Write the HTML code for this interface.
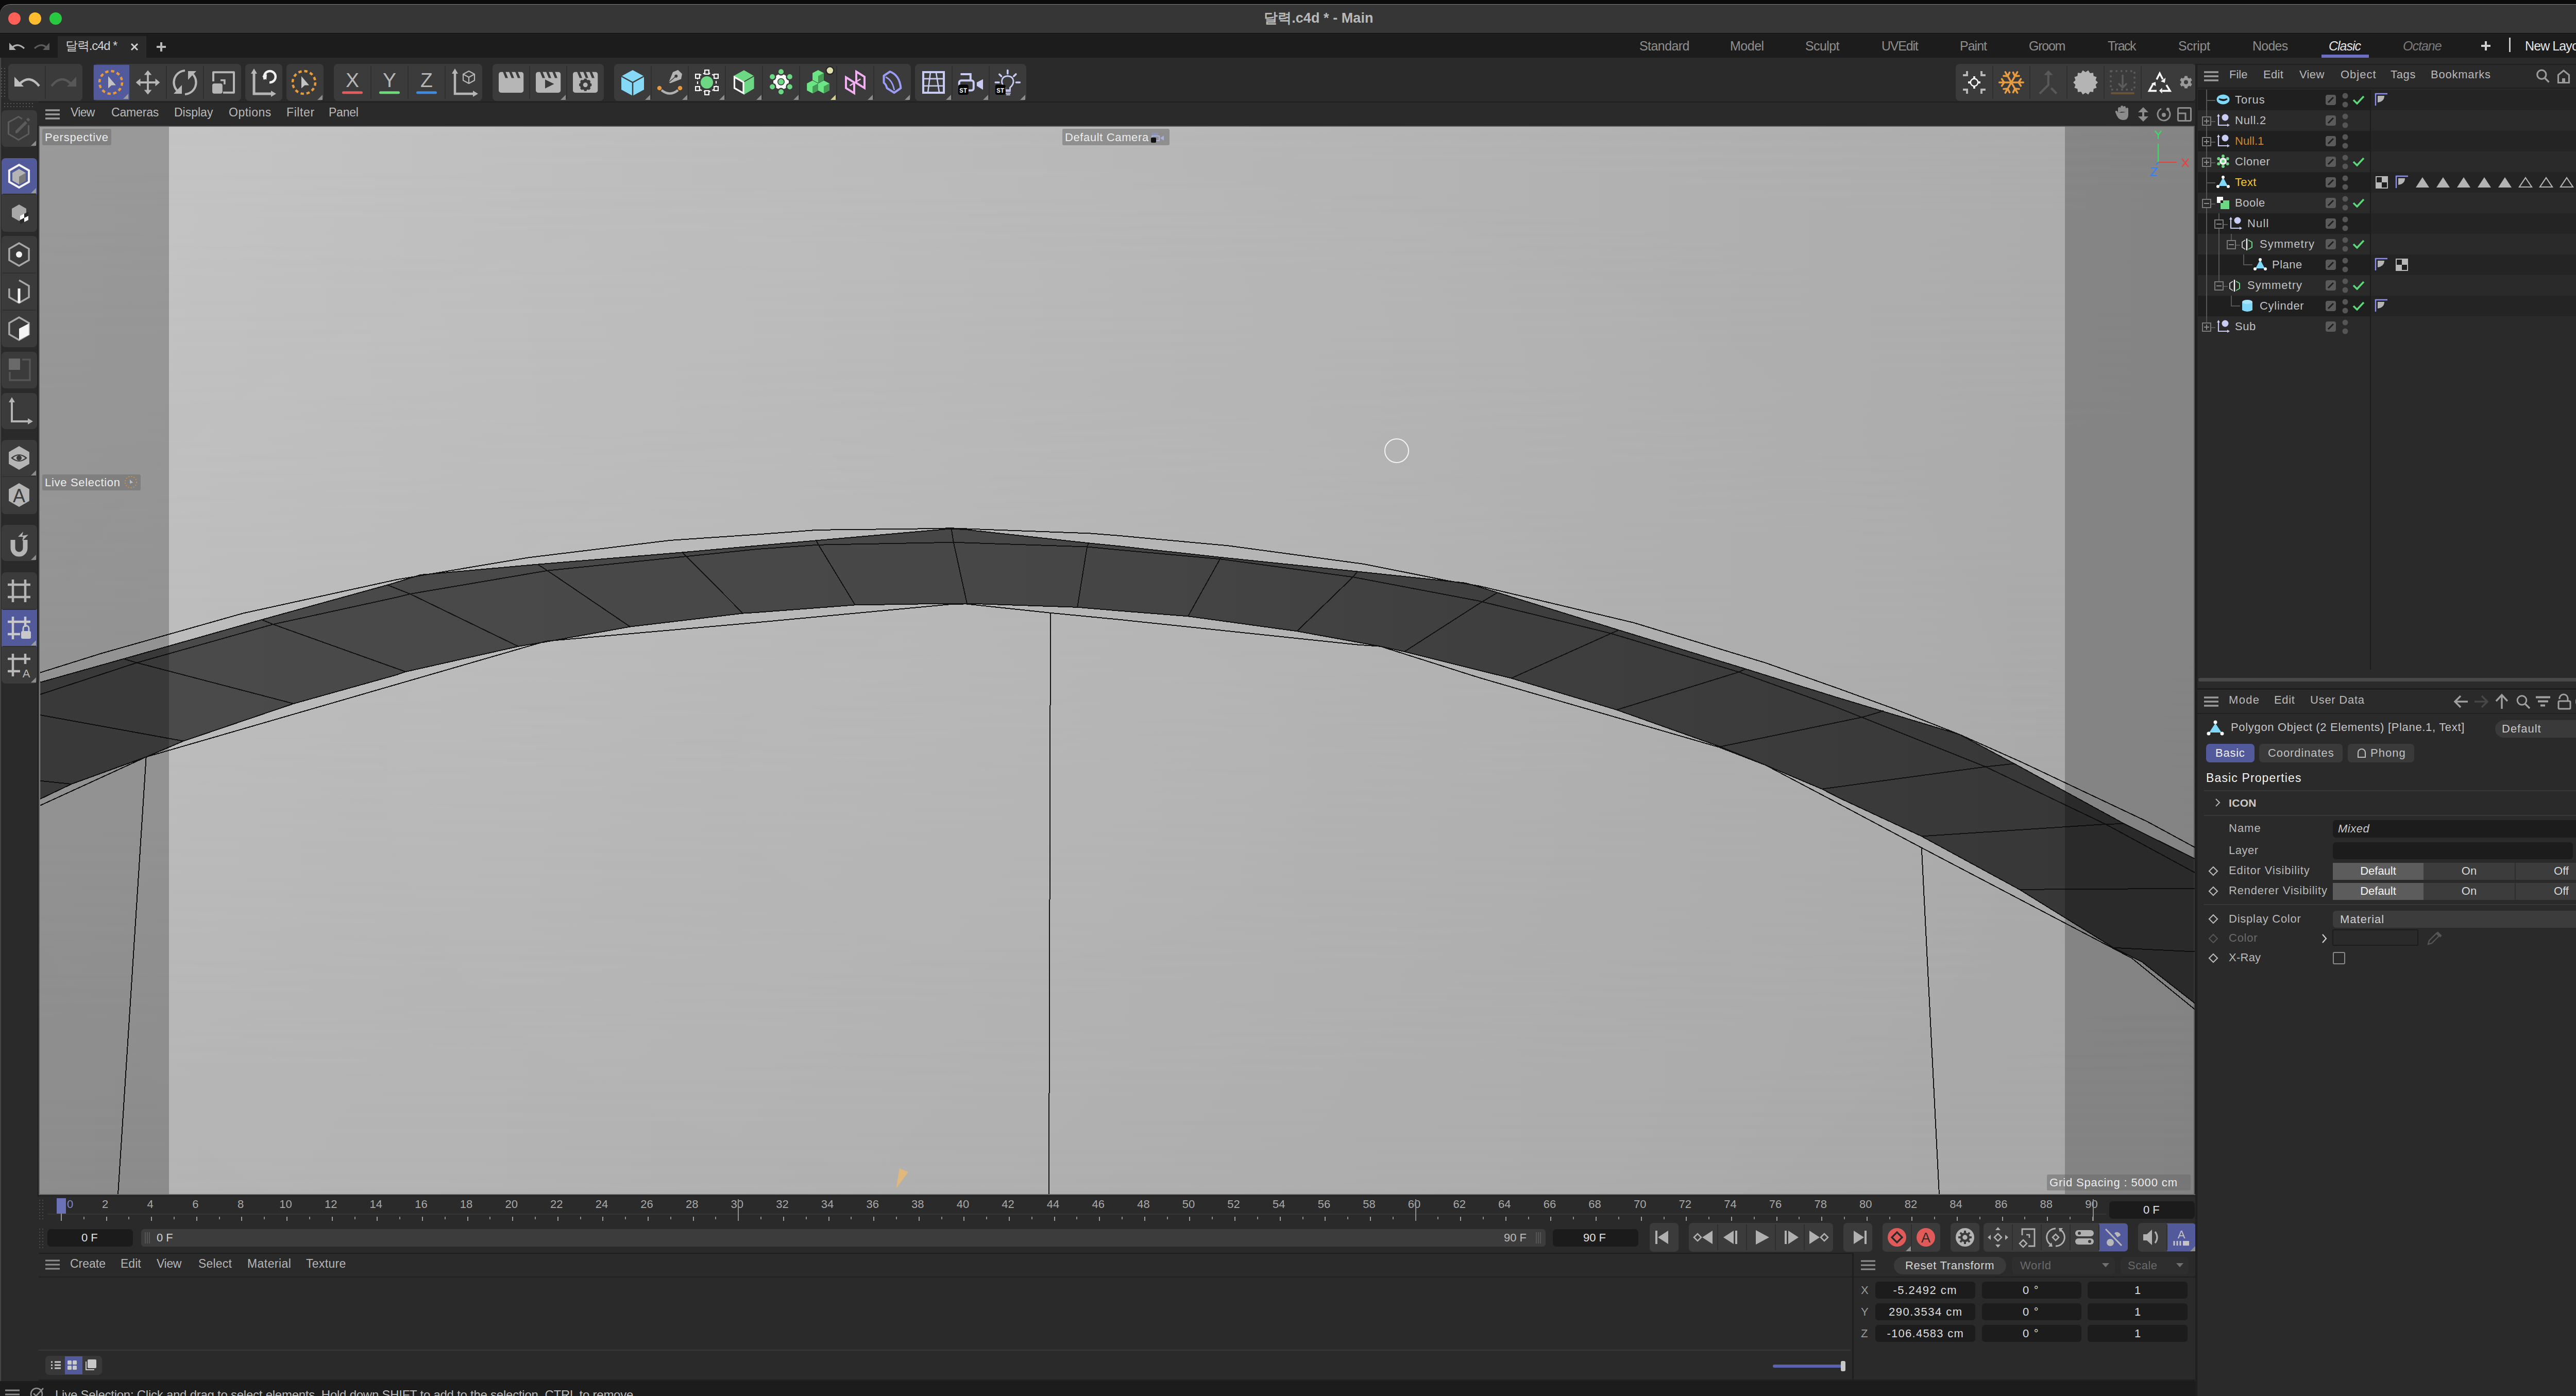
<!DOCTYPE html>
<html><head><meta charset="utf-8">
<style>
*{margin:0;padding:0;box-sizing:border-box}
html,body{width:5054px;height:2710px;overflow:hidden;background:#0b0b0b;font-family:"Liberation Sans",sans-serif;position:relative}
.a{position:absolute}
.t{position:absolute;white-space:nowrap;line-height:1}
svg{overflow:visible}
</style></head><body>

<div class="a" style="left:0px;top:8px;width:5054px;height:2702px;background:#2a2a2a;border-radius:20px 20px 0 0;overflow:hidden"></div>
<div class="a" style="left:0px;top:8px;width:5054px;height:56px;background:#363636;border-radius:20px 20px 0 0;border-top:1px solid #808080"></div>
<div class="a" style="left:0px;top:64px;width:5054px;height:1px;background:#0f0f0f;"></div>
<div class="a" style="left:0px;top:65px;width:5054px;height:47px;background:#1c1c1c;"></div>
<div class="a" style="left:112px;top:70px;width:172px;height:42px;background:#2a2a2a;"></div>
<div class="a" style="left:16px;top:24px;width:24px;height:24px;border-radius:50%;background:#fe5f57"></div>
<div class="a" style="left:56px;top:24px;width:24px;height:24px;border-radius:50%;background:#febc2e"></div>
<div class="a" style="left:96px;top:24px;width:24px;height:24px;border-radius:50%;background:#28c840"></div>
<div class="t" style="left:2453px;top:22px;font-size:27px;color:#b9b9b9;letter-spacing:0.07px;font-weight:bold">달력.c4d * - Main</div>
<svg class="a" style="left:14px;top:80px" width="40" height="22" viewBox="0 0 40 22"><path d="M4 3 L4 17 L17 17 Z" fill="#b0b0b0"/><path d="M11 11 Q21 3 33 14" stroke="#b0b0b0" stroke-width="3.2" fill="none"/></svg>
<svg class="a" style="left:60px;top:80px" width="40" height="22" viewBox="0 0 40 22"><path d="M36 3 L36 17 L23 17 Z" fill="#5c5c5c"/><path d="M29 11 Q19 3 7 14" stroke="#5c5c5c" stroke-width="3.2" fill="none"/></svg>
<div class="t" style="left:127px;top:77px;font-size:24px;color:#d2d2d2;letter-spacing:-1.14px;">달력.c4d *</div>
<svg class="a" style="left:254px;top:84px" width="14" height="14" viewBox="0 0 14 14"><path d="M1 1 L13 13 M13 1 L1 13" stroke="#d0d0d0" stroke-width="3"/></svg>
<svg class="a" style="left:304px;top:82px" width="18" height="18" viewBox="0 0 18 18"><path d="M9 0 V18 M0 9 H18" stroke="#b8b8b8" stroke-width="4"/></svg>
<div class="t" style="left:3182px;top:77px;font-size:25px;color:#8e8e8e;letter-spacing:-0.57px;">Standard</div>
<div class="t" style="left:3358px;top:77px;font-size:25px;color:#8e8e8e;letter-spacing:-0.50px;">Model</div>
<div class="t" style="left:3504px;top:77px;font-size:25px;color:#8e8e8e;letter-spacing:-0.60px;">Sculpt</div>
<div class="t" style="left:3652px;top:77px;font-size:25px;color:#8e8e8e;letter-spacing:-1.20px;">UVEdit</div>
<div class="t" style="left:3804px;top:77px;font-size:25px;color:#8e8e8e;letter-spacing:-1.00px;">Paint</div>
<div class="t" style="left:3938px;top:77px;font-size:25px;color:#8e8e8e;letter-spacing:-1.25px;">Groom</div>
<div class="t" style="left:4091px;top:77px;font-size:25px;color:#8e8e8e;letter-spacing:-1.50px;">Track</div>
<div class="t" style="left:4228px;top:77px;font-size:25px;color:#8e8e8e;letter-spacing:-0.40px;">Script</div>
<div class="t" style="left:4372px;top:77px;font-size:25px;color:#8e8e8e;letter-spacing:-0.75px;">Nodes</div>
<div class="t" style="left:4520px;top:77px;font-size:25px;color:#e6e6e6;letter-spacing:-1.00px;font-style:italic">Clasic</div>
<div class="t" style="left:4664px;top:77px;font-size:25px;color:#7a7a7a;letter-spacing:-1.00px;font-style:italic">Octane</div>
<div class="a" style="left:4506px;top:106px;width:92px;height:6px;background:#6b6fc2;"></div>
<svg class="a" style="left:4816px;top:80px" width="18" height="18" viewBox="0 0 18 18"><path d="M9 0 V18 M0 9 H18" stroke="#d0d0d0" stroke-width="4"/></svg>
<div class="a" style="left:4870px;top:73px;width:3px;height:28px;background:#c8c8c8;"></div>
<div class="t" style="left:4901px;top:77px;font-size:25px;color:#e6e6e6;letter-spacing:-0.90px;">New Layouts</div>
<div class="a" style="left:16px;top:124px;width:144px;height:72px;background:#3b3b3b;border-radius:8px"></div>
<div class="a" style="left:87px;top:128px;width:2px;height:64px;background:#2f2f2f;"></div>
<svg class="a" style="left:16px;top:124px" width="72" height="72" viewBox="0 0 72 72"><path d="M12 25 L12 44 L30 44 Z" fill="#bdbdbd"/><path d="M23 38 Q42 20 60 43" stroke="#bdbdbd" stroke-width="4.5" fill="none"/></svg>
<svg class="a" style="left:88px;top:124px" width="72" height="72" viewBox="0 0 72 72"><path d="M60 25 L60 44 L42 44 Z" fill="#575757"/><path d="M49 38 Q30 20 12 43" stroke="#575757" stroke-width="4.5" fill="none"/></svg>
<div class="a" style="left:181px;top:124px;width:287px;height:72px;background:#3b3b3b;border-radius:8px"></div>
<div class="a" style="left:182px;top:126px;width:69px;height:68px;background:#525a9c;"></div>
<div class="a" style="left:322px;top:128px;width:2px;height:64px;background:#2f2f2f;"></div>
<div class="a" style="left:394px;top:128px;width:2px;height:64px;background:#2f2f2f;"></div>
<svg class="a" style="left:181px;top:124px" width="72" height="72" viewBox="0 0 72 72"><circle cx="34" cy="36" r="22" fill="none" stroke="#e59b3a" stroke-width="4.5" stroke-dasharray="6.4 5.1"/><path d="M29 24 L44 41.5 L35.5 41.5 L29 47.5 Z" fill="#c4c4c4"/><path d="M58 68 L68 58 L68 68 Z" fill="#9a9a9a"/></svg>
<svg class="a" style="left:251px;top:124px" width="72" height="72" viewBox="0 0 72 72"><path d="M36 18 V54 M18 36 H54" stroke="#b6b6b6" stroke-width="3.8"/><path d="M36 12.6 L28.6 21.5 H43.4 Z M36 59.4 L28.6 50.5 H43.4 Z M12.6 36 L21.5 28.6 V43.4 Z M59.4 36 L50.5 28.6 V43.4 Z" fill="#b6b6b6"/></svg>
<svg class="a" style="left:323px;top:124px" width="72" height="72" viewBox="0 0 72 72"><path d="M36 13 A23 23 0 0 0 22 53" stroke="#b6b6b6" stroke-width="4.2" fill="none"/><path d="M14 58 L30 58 L30 41 Z" fill="#b6b6b6"/><path d="M36 59 A23 23 0 0 0 50 19" stroke="#b6b6b6" stroke-width="4.2" fill="none"/><path d="M58 14 L42 14 L42 31 Z" fill="#b6b6b6"/></svg>
<svg class="a" style="left:395px;top:124px" width="72" height="72" viewBox="0 0 72 72"><path d="M19 34 V16.2 H59 V55.7 H38" stroke="#b6b6b6" stroke-width="4" fill="none" stroke-linejoin="round"/><rect x="17" y="38" width="19.8" height="19.7" rx="4" fill="#b6b6b6"/><path d="M33 31.7 H40.9 V39.8" stroke="#b6b6b6" stroke-width="3.6" fill="none"/></svg>
<div class="a" style="left:476px;top:124px;width:72px;height:72px;background:#3b3b3b;border-radius:8px"></div>
<svg class="a" style="left:476px;top:124px" width="72" height="72" viewBox="0 0 72 72"><path d="M17 17 V58 H52" stroke="#b6b6b6" stroke-width="5" fill="none"/><path d="M17 9 L11 19 L23 19 Z M60 58 L50 52 L50 64 Z" fill="#b6b6b6"/><path d="M38 30 A11 11 0 1 1 47 36" stroke="#f2f2f2" stroke-width="4.5" fill="none"/><path d="M33 24 L42 20 L41 31 Z" fill="#f2f2f2"/></svg>
<div class="a" style="left:556px;top:124px;width:72px;height:72px;background:#3b3b3b;border-radius:8px"></div>
<svg class="a" style="left:556px;top:124px" width="72" height="72" viewBox="0 0 72 72"><circle cx="34" cy="36" r="22" fill="none" stroke="#e59b3a" stroke-width="4.5" stroke-dasharray="6.4 5.1"/><path d="M29 24 L44 41.5 L35.5 41.5 L29 47.5 Z" fill="#c4c4c4"/></svg>
<svg class="a" style="left:556px;top:124px" width="72" height="72" viewBox="0 0 72 72"><path d="M60 70 L70 60 L70 70 Z" fill="#8c8c8c"/></svg>
<div class="a" style="left:648px;top:124px;width:288px;height:72px;background:#3b3b3b;border-radius:8px"></div>
<div class="a" style="left:719px;top:128px;width:2px;height:64px;background:#2f2f2f;"></div>
<div class="a" style="left:791px;top:128px;width:2px;height:64px;background:#2f2f2f;"></div>
<div class="a" style="left:863px;top:128px;width:2px;height:64px;background:#2f2f2f;"></div>
<svg class="a" style="left:648px;top:124px" width="72" height="72" viewBox="0 0 72 72"><text x="36" y="44.5" font-size="39" text-anchor="middle" fill="#b6b6b6" font-family="Liberation Sans">X</text><rect x="16" y="53.2" width="40" height="5" rx="2.5" fill="#e65c5c"/></svg>
<svg class="a" style="left:720px;top:124px" width="72" height="72" viewBox="0 0 72 72"><text x="36" y="44.5" font-size="39" text-anchor="middle" fill="#b6b6b6" font-family="Liberation Sans">Y</text><rect x="16" y="53.2" width="40" height="5" rx="2.5" fill="#6bdc7a"/></svg>
<svg class="a" style="left:792px;top:124px" width="72" height="72" viewBox="0 0 72 72"><text x="36" y="44.5" font-size="39" text-anchor="middle" fill="#b6b6b6" font-family="Liberation Sans">Z</text><rect x="16" y="53.2" width="40" height="5" rx="2.5" fill="#3c8ce6"/></svg>
<svg class="a" style="left:864px;top:124px" width="72" height="72" viewBox="0 0 72 72"><path d="M19 17 V58 H56" stroke="#b6b6b6" stroke-width="4.5" fill="none"/><path d="M19 9 L13 19 L25 19 Z M64 58 L54 52 L54 64 Z" fill="#b6b6b6"/><path d="M46 14 L57 20 L57 32 L46 38 L35 32 L35 20 Z M35 20 L46 26 L57 20 M46 26 V38" stroke="#b6b6b6" stroke-width="2.2" fill="none" stroke-linejoin="round"/></svg>
<div class="a" style="left:956px;top:124px;width:216px;height:72px;background:#3b3b3b;border-radius:8px"></div>
<div class="a" style="left:1027px;top:128px;width:2px;height:64px;background:#2f2f2f;"></div>
<div class="a" style="left:1099px;top:128px;width:2px;height:64px;background:#2f2f2f;"></div>
<svg class="a" style="left:956px;top:124px" width="72" height="72" viewBox="0 0 72 72"><rect x="12" y="15.8" width="48.2" height="40.1" rx="4.5" fill="#b6b6b6"/><path d="M20 15 H25 L30 27.5 H25 Z M32 15 H37 L42 27.5 H37 Z M44 15 H49 L54 27.5 H49 Z" fill="#3b3b3b"/></svg>
<svg class="a" style="left:1028px;top:124px" width="72" height="72" viewBox="0 0 72 72"><rect x="12" y="15.8" width="48.2" height="40.1" rx="4.5" fill="#b6b6b6"/><path d="M20 15 H25 L30 27.5 H25 Z M32 15 H37 L42 27.5 H37 Z M44 15 H49 L54 27.5 H49 Z" fill="#3b3b3b"/><path d="M30 30.3 L47.6 39 L30 47.7 Z" fill="#3b3b3b"/></svg>
<svg class="a" style="left:1100px;top:124px" width="72" height="72" viewBox="0 0 72 72"><rect x="12" y="15.8" width="48.2" height="40.1" rx="4.5" fill="#b6b6b6"/><path d="M20 15 H25 L30 27.5 H25 Z M32 15 H37 L42 27.5 H37 Z M44 15 H49 L54 27.5 H49 Z" fill="#3b3b3b"/><circle cx="36.2" cy="40.7" r="7.5" fill="none" stroke="#3b3b3b" stroke-width="6"/><rect x="33.7" y="28.6" width="5" height="5" fill="#3b3b3b" transform="rotate(0 36.2 40.7)"/><rect x="33.7" y="28.6" width="5" height="5" fill="#3b3b3b" transform="rotate(45 36.2 40.7)"/><rect x="33.7" y="28.6" width="5" height="5" fill="#3b3b3b" transform="rotate(90 36.2 40.7)"/><rect x="33.7" y="28.6" width="5" height="5" fill="#3b3b3b" transform="rotate(135 36.2 40.7)"/><rect x="33.7" y="28.6" width="5" height="5" fill="#3b3b3b" transform="rotate(180 36.2 40.7)"/><rect x="33.7" y="28.6" width="5" height="5" fill="#3b3b3b" transform="rotate(225 36.2 40.7)"/><rect x="33.7" y="28.6" width="5" height="5" fill="#3b3b3b" transform="rotate(270 36.2 40.7)"/><rect x="33.7" y="28.6" width="5" height="5" fill="#3b3b3b" transform="rotate(315 36.2 40.7)"/></svg>
<svg class="a" style="left:1028px;top:124px" width="72" height="72" viewBox="0 0 72 72"><path d="M60 70 L70 60 L70 70 Z" fill="#8c8c8c"/></svg>
<div class="a" style="left:1192px;top:124px;width:576px;height:72px;background:#3b3b3b;border-radius:8px"></div>
<div class="a" style="left:1263px;top:128px;width:2px;height:64px;background:#2f2f2f;"></div>
<div class="a" style="left:1335px;top:128px;width:2px;height:64px;background:#2f2f2f;"></div>
<div class="a" style="left:1407px;top:128px;width:2px;height:64px;background:#2f2f2f;"></div>
<div class="a" style="left:1479px;top:128px;width:2px;height:64px;background:#2f2f2f;"></div>
<div class="a" style="left:1551px;top:128px;width:2px;height:64px;background:#2f2f2f;"></div>
<div class="a" style="left:1623px;top:128px;width:2px;height:64px;background:#2f2f2f;"></div>
<div class="a" style="left:1695px;top:128px;width:2px;height:64px;background:#2f2f2f;"></div>
<svg class="a" style="left:1192px;top:124px" width="72" height="72" viewBox="0 0 72 72"><path d="M36 12 L58 24 L58 50 L36 62 L14 50 L14 24 Z" fill="#86d8f7"/><path d="M14 24 L36 36 L58 24 M36 36 V62" stroke="#3b3b3b" stroke-width="2.5" fill="none"/></svg>
<svg class="a" style="left:1264px;top:124px" width="72" height="72" viewBox="0 0 72 72"><path d="M34 36 L42 16 L52 11.7 L60 19.6 L58 29.6 L37 37.5 Z" fill="#b4b4b4"/><path d="M34 36 L48 24" stroke="#3b3b3b" stroke-width="1.6"/><circle cx="48.3" cy="23.7" r="3" fill="#3b3b3b"/><path d="M20 51 Q36 64 52 51" stroke="#b0b0b0" stroke-width="4.5" fill="none"/><circle cx="16" cy="47" r="4.3" fill="#e8983a"/><circle cx="56" cy="47" r="4.3" fill="#e8983a"/></svg>
<svg class="a" style="left:1336px;top:124px" width="72" height="72" viewBox="0 0 72 72"><circle cx="36" cy="36" r="12.1" fill="#6cd884"/><path d="M36 16 L54 24 L54 48 L36 56 L18 48 L18 24 Z" fill="none" stroke="#fafafa" stroke-width="2.2" stroke-dasharray="5 4" stroke-dashoffset="7"/><rect x="32.1" y="12.1" width="7.8" height="7.8" fill="#3b3b3b" stroke="#fafafa" stroke-width="2.2"/><rect x="50.1" y="20.1" width="7.8" height="7.8" fill="#3b3b3b" stroke="#fafafa" stroke-width="2.2"/><rect x="50.1" y="44.1" width="7.8" height="7.8" fill="#3b3b3b" stroke="#fafafa" stroke-width="2.2"/><rect x="32.1" y="52.1" width="7.8" height="7.8" fill="#3b3b3b" stroke="#fafafa" stroke-width="2.2"/><rect x="14.1" y="44.1" width="7.8" height="7.8" fill="#3b3b3b" stroke="#fafafa" stroke-width="2.2"/><rect x="14.1" y="20.1" width="7.8" height="7.8" fill="#3b3b3b" stroke="#fafafa" stroke-width="2.2"/></svg>
<svg class="a" style="left:1408px;top:124px" width="72" height="72" viewBox="0 0 72 72"><path d="M36 12.3 L55.6 23.5 L36 34.7 L15.9 23.5 Z M55.6 23.5 L55.6 48 L36 59.8 L36 34.7 Z" fill="#6cd884"/><path d="M36 34.7 L55.6 23.5" stroke="#3b3b3b" stroke-width="1.6"/><path d="M17.5 25.5 L35 35.5 L35 57 L17.5 47 Z" fill="#3b3b3b" stroke="#fafafa" stroke-width="3.2" stroke-linejoin="miter"/></svg>
<svg class="a" style="left:1480px;top:124px" width="72" height="72" viewBox="0 0 72 72"><circle cx="36" cy="34.7" r="15" fill="#fafafa"/><circle cx="36.0" cy="16.2" r="6.6" fill="#3b3b3b"/><circle cx="52.0" cy="25.5" r="6.6" fill="#3b3b3b"/><circle cx="52.0" cy="44.0" r="6.6" fill="#3b3b3b"/><circle cx="36.0" cy="53.2" r="6.6" fill="#3b3b3b"/><circle cx="20.0" cy="44.0" r="6.6" fill="#3b3b3b"/><circle cx="20.0" cy="25.5" r="6.6" fill="#3b3b3b"/><circle cx="36.0" cy="15.2" r="5" fill="#6cd884"/><circle cx="52.9" cy="25.0" r="5" fill="#6cd884"/><circle cx="52.9" cy="44.5" r="5" fill="#6cd884"/><circle cx="36.0" cy="54.2" r="5" fill="#6cd884"/><circle cx="19.1" cy="44.5" r="5" fill="#6cd884"/><circle cx="19.1" cy="25.0" r="5" fill="#6cd884"/><circle cx="36" cy="34.7" r="7" fill="#3b3b3b"/><circle cx="36" cy="34.7" r="5.4" fill="#6cd884"/></svg>
<svg class="a" style="left:1552px;top:124px" width="72" height="72" viewBox="0 0 72 72"><path d="M36 12 L25.1 17.7 L25.1 31.3 L36 37 L46.9 31.3 L46.9 17.7 Z" fill="#6ce685"/><path d="M36 23.4 L46.9 17.7 L46.9 31.3 L36 37 Z" fill="#479a55"/><path d="M25.1 32.3 L14.200000000000001 38.0 L14.200000000000001 51.599999999999994 L25.1 57.3 L36.0 51.599999999999994 L36.0 38.0 Z" fill="#6ce685"/><path d="M25.1 43.699999999999996 L36.0 38.0 L36.0 51.599999999999994 L25.1 57.3 Z" fill="#479a55"/><path d="M46.9 32.3 L36.0 38.0 L36.0 51.599999999999994 L46.9 57.3 L57.8 51.599999999999994 L57.8 38.0 Z" fill="#6ce685"/><path d="M46.9 43.699999999999996 L57.8 38.0 L57.8 51.599999999999994 L46.9 57.3 Z" fill="#479a55"/><circle cx="58.9" cy="12.8" r="8.6" fill="#262626"/><circle cx="58.9" cy="12.8" r="6.2" fill="#e0dfb0"/></svg>
<svg class="a" style="left:1624px;top:124px" width="72" height="72" viewBox="0 0 72 72"><path d="M18 26 L34 36 L34 57 L18 47 Z M38 15 L54 25 L54 47 L38 37 Z" fill="none" stroke="#f2b0f2" stroke-width="4" stroke-linejoin="miter"/><path d="M26.4 41.7 L45.6 29.9" stroke="#f2b0f2" stroke-width="2.6" stroke-linecap="round"/></svg>
<svg class="a" style="left:1696px;top:124px" width="72" height="72" viewBox="0 0 72 72"><path d="M19.5 23 L31.5 15 Q50 22 52.5 47 L39.6 56 L25.5 47 Q24 40 19.5 36.5 Z" fill="none" stroke="#9a9cf6" stroke-width="4" stroke-linejoin="round"/><path d="M24 26 Q36 32 39.6 50" stroke="#9a9cf6" stroke-width="2.8" fill="none" stroke-linecap="round"/></svg>
<svg class="a" style="left:1192px;top:124px" width="72" height="72" viewBox="0 0 72 72"><path d="M60 70 L70 60 L70 70 Z" fill="#8c8c8c"/></svg>
<svg class="a" style="left:1264px;top:124px" width="72" height="72" viewBox="0 0 72 72"><path d="M60 70 L70 60 L70 70 Z" fill="#8c8c8c"/></svg>
<svg class="a" style="left:1336px;top:124px" width="72" height="72" viewBox="0 0 72 72"><path d="M60 70 L70 60 L70 70 Z" fill="#8c8c8c"/></svg>
<svg class="a" style="left:1408px;top:124px" width="72" height="72" viewBox="0 0 72 72"><path d="M60 70 L70 60 L70 70 Z" fill="#8c8c8c"/></svg>
<svg class="a" style="left:1480px;top:124px" width="72" height="72" viewBox="0 0 72 72"><path d="M60 70 L70 60 L70 70 Z" fill="#8c8c8c"/></svg>
<svg class="a" style="left:1552px;top:124px" width="72" height="72" viewBox="0 0 72 72"><path d="M60 70 L70 60 L70 70 Z" fill="#d6d08a"/></svg>
<svg class="a" style="left:1624px;top:124px" width="72" height="72" viewBox="0 0 72 72"><path d="M60 70 L70 60 L70 70 Z" fill="#8c8c8c"/></svg>
<svg class="a" style="left:1696px;top:124px" width="72" height="72" viewBox="0 0 72 72"><path d="M60 70 L70 60 L70 70 Z" fill="#8c8c8c"/></svg>
<div class="a" style="left:1776px;top:124px;width:216px;height:72px;background:#3b3b3b;border-radius:8px"></div>
<div class="a" style="left:1847px;top:128px;width:2px;height:64px;background:#2f2f2f;"></div>
<div class="a" style="left:1919px;top:128px;width:2px;height:64px;background:#2f2f2f;"></div>
<svg class="a" style="left:1776px;top:124px" width="72" height="72" viewBox="0 0 72 72"><rect x="16" y="16" width="40" height="40" fill="none" stroke="#c8ccf4" stroke-width="4"/><path d="M16 28.9 H56 M16 42.7 H56 M29.8 17 L25.1 55 M41 17 L47 55" stroke="#c8ccf4" stroke-width="2.6"/></svg>
<svg class="a" style="left:1848px;top:124px" width="72" height="72" viewBox="0 0 72 72"><path d="M16.5 20 H35.8 V31" stroke="#c8ccf4" stroke-width="4" fill="none"/><rect x="13.8" y="32.2" width="28" height="19.4" rx="4" fill="none" stroke="#c8ccf4" stroke-width="4"/><path d="M47.9 36 L60 29.8 V50.3 L47.9 42.7 Z" fill="#c8ccf4"/><rect x="11.8" y="40.2" width="20" height="19.8" rx="4" fill="#050505"/><text x="21.8" y="55.5" font-size="12.5" font-weight="bold" text-anchor="middle" fill="#f0f0f0" font-family="Liberation Mono">ST</text></svg>
<svg class="a" style="left:1920px;top:124px" width="72" height="72" viewBox="0 0 72 72"><path d="M31 46 Q24 40 24.5 33 Q25.5 24 35.8 23.5 Q46 24 47 33 Q47.5 40 40.5 46 V51 H31 Z" fill="none" stroke="#c8ccf4" stroke-width="2.8"/><path d="M32 53.6 H41.7 M32 57 H41.7 M33 60 H40.7" stroke="#c8ccf4" stroke-width="2"/><path d="M35.8 12.5 V19 M19.8 20.3 L23.6 24.1 M47.7 24.1 L51.9 19.9 M12.2 36 H19 M52.4 36 H59.4" stroke="#c8ccf4" stroke-width="3.6" stroke-linecap="round"/><rect x="11.8" y="40.2" width="20" height="19.8" rx="4" fill="#050505"/><text x="21.8" y="55.5" font-size="12.5" font-weight="bold" text-anchor="middle" fill="#f0f0f0" font-family="Liberation Mono">ST</text></svg>
<svg class="a" style="left:1776px;top:124px" width="72" height="72" viewBox="0 0 72 72"><path d="M60 70 L70 60 L70 70 Z" fill="#8c8c8c"/></svg>
<svg class="a" style="left:1848px;top:124px" width="72" height="72" viewBox="0 0 72 72"><path d="M60 70 L70 60 L70 70 Z" fill="#8c8c8c"/></svg>
<svg class="a" style="left:1920px;top:124px" width="72" height="72" viewBox="0 0 72 72"><path d="M60 70 L70 60 L70 70 Z" fill="#8c8c8c"/></svg>
<div class="a" style="left:3796px;top:124px;width:466px;height:72px;background:#3b3b3b;border-radius:8px"></div>
<div class="a" style="left:3867px;top:128px;width:2px;height:64px;background:#2f2f2f;"></div>
<div class="a" style="left:3939px;top:128px;width:2px;height:64px;background:#2f2f2f;"></div>
<div class="a" style="left:4011px;top:128px;width:2px;height:64px;background:#2f2f2f;"></div>
<div class="a" style="left:4083px;top:128px;width:2px;height:64px;background:#2f2f2f;"></div>
<div class="a" style="left:4155px;top:128px;width:2px;height:64px;background:#2f2f2f;"></div>
<svg class="a" style="left:3796px;top:124px" width="72" height="72" viewBox="0 0 72 72"><path d="M14.1 22 H22 V14.1 M57.9 22 H50 V14.1 M14.1 50 H22 V57.9 M57.9 50 H50 V57.9" stroke="#b8b8b8" stroke-width="3.9" fill="none"/><circle cx="36" cy="36" r="7.2" fill="none" stroke="#fafafa" stroke-width="2.4"/><path d="M36 24 V29 M36 43 V48 M24 36 H29 M43 36 H48" stroke="#fafafa" stroke-width="3.8"/></svg>
<svg class="a" style="left:3868px;top:124px" width="72" height="72" viewBox="0 0 72 72"><g stroke="#e89c42" stroke-width="3.6" fill="none" stroke-linecap="round"><g transform="rotate(0 36 36)"><path d="M12.7 36 H59.3 M17.5 29.3 L22 36 L17.5 42.7 M54.5 29.3 L50 36 L54.5 42.7"/></g><g transform="rotate(60 36 36)"><path d="M12.7 36 H59.3 M17.5 29.3 L22 36 L17.5 42.7 M54.5 29.3 L50 36 L54.5 42.7"/></g><g transform="rotate(120 36 36)"><path d="M12.7 36 H59.3 M17.5 29.3 L22 36 L17.5 42.7 M54.5 29.3 L50 36 L54.5 42.7"/></g></g></svg>
<svg class="a" style="left:3940px;top:124px" width="72" height="72" viewBox="0 0 72 72"><path d="M35.8 21 V41 L19 57.8 M41.3 46.9 L51.7 57.4" stroke="#595959" stroke-width="4.2" fill="none"/><path d="M27 21.8 L35.8 12.6 L45 21.8 Z" fill="#595959"/></svg>
<svg class="a" style="left:4012px;top:124px" width="72" height="72" viewBox="0 0 72 72"><path d="M60.0 36.0 L55.5 40.5 L57.6 46.4 L51.6 48.5 L51.0 54.8 L44.7 54.0 L41.3 59.4 L36.0 56.0 L30.7 59.4 L27.3 54.0 L21.0 54.8 L20.4 48.5 L14.4 46.4 L16.5 40.5 L12.0 36.0 L16.5 31.5 L14.4 25.6 L20.4 23.5 L21.0 17.2 L27.3 18.0 L30.7 12.6 L36.0 16.0 L41.3 12.6 L44.7 18.0 L51.0 17.2 L51.6 23.5 L57.6 25.6 L55.5 31.5 Z" fill="#b4b4b4"/></svg>
<svg class="a" style="left:4084px;top:124px" width="72" height="72" viewBox="0 0 72 72"><path d="M13 14 H59 V50 H13 Z" fill="none" stroke="#5c5c5c" stroke-width="3.5" stroke-dasharray="3.5 6"/><path d="M36 21 V46 M28 38 L36 46 L44 38" stroke="#5c5c5c" stroke-width="3.5" fill="none"/><rect x="13" y="55" width="46" height="4" rx="2" fill="#6a5238"/></svg>
<svg class="a" style="left:4156px;top:124px" width="72" height="72" viewBox="0 0 72 72"><g stroke="#fafafa" stroke-width="3.6" fill="none" stroke-linejoin="miter"><path d="M30 30.2 L36 18.5 L42 30"/><path d="M48.9 41 L56 52.4 H41"/><path d="M30 52.4 H15.6 L22.8 39.5"/></g><path d="M38 33.9 L47.4 27.1 L45.9 36.8 Z M34.9 51.9 L40.7 46.4 V57.4 Z M19.8 38.1 L27.9 34.9 L28.4 43.3 Z" fill="#fafafa"/></svg>
<svg class="a" style="left:4226px;top:124px" width="36" height="72" viewBox="0 0 36 72"><path d="M13.94,26.61 L14.23,23.52 L19.77,23.52 L20.06,26.61 L23.17,28.41 L26.00,27.11 L28.76,31.90 L26.23,33.71 L26.23,37.29 L28.76,39.10 L26.00,43.89 L23.17,42.59 L20.06,44.39 L19.77,47.48 L14.23,47.48 L13.94,44.39 L10.83,42.59 L8.00,43.89 L5.24,39.10 L7.77,37.29 L7.77,33.71 L5.24,31.90 L8.00,27.11 L10.83,28.41 Z" fill="#9a9a9a"/><circle cx="17" cy="35.5" r="4" fill="#3b3b3b"/></svg>
<div class="a" style="left:0px;top:130px;width:12px;height:60px;background-image:linear-gradient(90deg,transparent 2px,#555 2px,#555 4px,transparent 4px);background-size:6px 6px"></div>
<div class="a" style="left:0px;top:130px;width:12px;height:60px;background-image:linear-gradient(#2a2a2a 2px,transparent 2px,transparent 4px,#2a2a2a 4px);background-size:6px 6px"></div>
<div class="a" style="left:6px;top:198px;width:60px;height:12px;background-image:linear-gradient(90deg,transparent 2px,#555 2px,#555 4px,transparent 4px);background-size:6px 6px"></div>
<div class="a" style="left:6px;top:198px;width:60px;height:12px;background-image:linear-gradient(#2a2a2a 2px,transparent 2px,transparent 4px,#2a2a2a 4px);background-size:6px 6px"></div>
<div class="a" style="left:3px;top:214px;width:69px;height:71px;background:#3b3b3b;border-radius:8px"></div>
<svg class="a" style="left:3px;top:213px" width="69" height="72" viewBox="0 0 69 72"><path d="M40 18 L33 13.5 L13.5 24.5 V47 L33 58.5 L52.5 47 V30" fill="none" stroke="#5c5c5c" stroke-width="3"/><path d="M27 46 V41 L46 22 L50 26 L31 45 Z" fill="#5c5c5c"/><path d="M48 19 L51.5 15.5 L55.5 19.5 L52 23 Z" fill="#5c5c5c"/></svg>
<svg class="a" style="left:3px;top:213px" width="69" height="72" viewBox="0 0 69 72"><path d="M57 70 L67 60 L67 70 Z" fill="#8c8c8c"/></svg>
<div class="a" style="left:3px;top:307px;width:69px;height:143px;background:#3b3b3b;border-radius:8px"></div>
<div class="a" style="left:3px;top:307px;width:69px;height:70px;background:#525a9c;border-radius:8px 8px 0 0"></div>
<svg class="a" style="left:3px;top:306px" width="69" height="72" viewBox="0 0 69 72"><polygon points="34.0,14.0 53.1,25.0 53.1,47.0 34.0,58.0 14.9,47.0 14.9,25.0" fill="none" stroke="#f4f4f4" stroke-width="4"/><path d="M34 22 L47 29.5 L47 44.5 L34 52 L21 44.5 L21 29.5 Z" fill="#b4b4b4"/><path d="M34 37 L47 29.5 L47 44.5 L34 52 Z" fill="#7a7a7a"/></svg>
<svg class="a" style="left:3px;top:305px" width="69" height="72" viewBox="0 0 69 72"><path d="M57 70 L67 60 L67 70 Z" fill="#9a9a9a"/></svg>
<div class="a" style="left:5px;top:376px;width:65px;height:2px;background:#303030;"></div>
<svg class="a" style="left:3px;top:377px" width="69" height="72" viewBox="0 0 69 72"><path d="M34 20 L48 28 L48 44 L34 52 L20 44 L20 28 Z" fill="#a8a8a8"/><path d="M36 42 L44 38 L44 46 L36 50 Z M44 46 L52 42 L52 50 L44 54 Z" fill="#fafafa"/><path d="M36 50 L44 46 L44 54 L36 58 Z M44 38 L52 34 L52 42 L44 46 Z" fill="#2a2a2a"/></svg>
<div class="a" style="left:3px;top:458px;width:69px;height:216px;background:#3b3b3b;border-radius:8px"></div>
<svg class="a" style="left:3px;top:458px" width="69" height="72" viewBox="0 0 69 72"><polygon points="34.0,14.0 53.1,25.0 53.1,47.0 34.0,58.0 14.9,47.0 14.9,25.0" fill="none" stroke="#a8a8a8" stroke-width="3.5"/><circle cx="34" cy="36" r="6" fill="#f4f4f4"/></svg>
<div class="a" style="left:5px;top:529px;width:65px;height:2px;background:#303030;"></div>
<svg class="a" style="left:3px;top:530px" width="69" height="72" viewBox="0 0 69 72"><polyline points="34.0,14.0 53.1,25.0 53.1,47.0 34.0,58.0 14.9,47.0 14.9,25.0" fill="none" stroke="#a8a8a8" stroke-width="3.5" stroke-dasharray="105 12"/><path d="M34 30 V58" stroke="#f4f4f4" stroke-width="5"/></svg>
<div class="a" style="left:5px;top:601px;width:65px;height:2px;background:#303030;"></div>
<svg class="a" style="left:3px;top:602px" width="69" height="72" viewBox="0 0 69 72"><polygon points="34.0,14.0 53.1,25.0 53.1,47.0 34.0,58.0 14.9,47.0 14.9,25.0" fill="none" stroke="#a8a8a8" stroke-width="3.5"/><path d="M34 36 L53 26 L53 48 L34 58 Z" fill="#f4f4f4"/></svg>
<div class="a" style="left:3px;top:683px;width:69px;height:71px;background:#3b3b3b;border-radius:8px"></div>
<svg class="a" style="left:3px;top:682px" width="69" height="72" viewBox="0 0 69 72"><rect x="14" y="14" width="22" height="22" fill="#6a6a6a"/><path d="M40 16 H55 V56 H16 V40" stroke="#555" stroke-width="3.5" fill="none"/></svg>
<div class="a" style="left:3px;top:763px;width:69px;height:70px;background:#3b3b3b;border-radius:8px"></div>
<svg class="a" style="left:3px;top:762px" width="69" height="72" viewBox="0 0 69 72"><path d="M20 16 V56 H54" stroke="#b4b4b4" stroke-width="4" fill="none"/><path d="M20 9 L14 19 L26 19 Z M61 56 L51 50 L51 62 Z" fill="#b4b4b4"/></svg>
<div class="a" style="left:3px;top:854px;width:69px;height:144px;background:#3b3b3b;border-radius:8px"></div>
<svg class="a" style="left:3px;top:853px" width="69" height="72" viewBox="0 0 69 72"><polygon points="34.0,13.0 53.9,24.5 53.9,47.5 34.0,59.0 14.1,47.5 14.1,24.5" fill="#b4b4b4"/><path d="M18 36 Q34 22 50 36 Q34 50 18 36 Z" fill="#3b3b3b"/><path d="M22 36 Q34 26 46 36 Q34 46 22 36 Z" fill="#b4b4b4"/><circle cx="34" cy="36" r="5" fill="#3b3b3b"/></svg>
<svg class="a" style="left:3px;top:853px" width="69" height="72" viewBox="0 0 69 72"><path d="M57 70 L67 60 L67 70 Z" fill="#8c8c8c"/></svg>
<div class="a" style="left:5px;top:924px;width:65px;height:2px;background:#303030;"></div>
<svg class="a" style="left:3px;top:925px" width="69" height="72" viewBox="0 0 69 72"><polygon points="34.0,13.0 53.9,24.5 53.9,47.5 34.0,59.0 14.1,47.5 14.1,24.5" fill="#b4b4b4"/><text x="34" y="50" font-size="36" text-anchor="middle" fill="#3b3b3b" font-family="Liberation Sans">A</text></svg>
<div class="a" style="left:3px;top:1019px;width:69px;height:70px;background:#3b3b3b;border-radius:8px"></div>
<svg class="a" style="left:3px;top:1018px" width="69" height="72" viewBox="0 0 69 72"><path d="M22 30 V46 A12 12 0 0 0 46 46 V30" stroke="#b4b4b4" stroke-width="9" fill="none"/><path d="M32 24 L42 14 L40 22 L52 20 L40 32 L42 24 Z" fill="#b4b4b4"/></svg>
<svg class="a" style="left:3px;top:1017px" width="69" height="72" viewBox="0 0 69 72"><path d="M57 70 L67 60 L67 70 Z" fill="#8c8c8c"/></svg>
<div class="a" style="left:3px;top:1111px;width:69px;height:216px;background:#3b3b3b;border-radius:8px"></div>
<svg class="a" style="left:3px;top:1111px" width="69" height="72" viewBox="0 0 69 72"><path d="M22 14 V58 M46 14 V58 M12 24 H56 M12 48 H56" stroke="#b4b4b4" stroke-width="4.5"/></svg>
<div class="a" style="left:3px;top:1183px;width:69px;height:72px;background:#525a9c;border-radius:0"></div>
<div class="a" style="left:5px;top:1182px;width:65px;height:2px;background:#303030;"></div>
<svg class="a" style="left:3px;top:1183px" width="69" height="72" viewBox="0 0 69 72"><path d="M22 14 V58 M12 24 H56 M12 48 H36 M46 14 V34" stroke="#c8c8c8" stroke-width="4.5"/><rect x="38" y="42" width="19" height="15" rx="3" fill="#c8c8c8"/><path d="M42 42 V37 A5.5 5.5 0 0 1 53 37 V42" stroke="#c8c8c8" stroke-width="3" fill="none"/></svg>
<svg class="a" style="left:3px;top:1183px" width="69" height="72" viewBox="0 0 69 72"><path d="M57 70 L67 60 L67 70 Z" fill="#9a9a9a"/></svg>
<div class="a" style="left:5px;top:1254px;width:65px;height:2px;background:#303030;"></div>
<svg class="a" style="left:3px;top:1255px" width="69" height="72" viewBox="0 0 69 72"><path d="M22 14 V58 M12 24 H56 M12 48 H36 M46 14 V34" stroke="#b8b8b8" stroke-width="4.5"/><text x="48" y="60" font-size="22" text-anchor="middle" fill="#b8b8b8" font-family="Liberation Sans">A</text></svg>
<svg class="a" style="left:3px;top:1255px" width="69" height="72" viewBox="0 0 69 72"><path d="M57 70 L67 60 L67 70 Z" fill="#8c8c8c"/></svg>
<div class="a" style="left:0px;top:112px;width:2px;height:2598px;background:#454545;"></div>
<div class="a" style="left:75px;top:197px;width:4185px;height:2px;background:#202020;"></div>
<div class="a" style="left:75px;top:199px;width:4185px;height:45px;background:#2a2a2a;"></div>
<svg class="a" style="left:88px;top:212px" width="28" height="20" viewBox="0 0 28 20"><path d="M0 2 H28 M0 10 H28 M0 18 H28" stroke="#9a9a9a" stroke-width="3.5"/></svg>
<div class="t" style="left:137px;top:207px;font-size:23px;color:#b8b8b8;letter-spacing:-0.67px;">View</div>
<div class="t" style="left:216px;top:207px;font-size:23px;color:#b8b8b8;letter-spacing:-0.17px;">Cameras</div>
<div class="t" style="left:338px;top:207px;font-size:23px;color:#b8b8b8;letter-spacing:0.00px;">Display</div>
<div class="t" style="left:444px;top:207px;font-size:23px;color:#b8b8b8;letter-spacing:0.50px;">Options</div>
<div class="t" style="left:556px;top:207px;font-size:23px;color:#b8b8b8;letter-spacing:0.60px;">Filter</div>
<div class="t" style="left:638px;top:207px;font-size:23px;color:#b8b8b8;letter-spacing:-0.25px;">Panel</div>
<svg class="a" style="left:4105px;top:205px" width="28" height="30" viewBox="0 0 28 30"><path d="M6 14 V6 Q6 3 9 3 Q11 3 11 6 V13 M11 12 V3 Q11 0 14 0 Q16 0 16 3 V12 M16 12 V3 Q16 1 19 1 Q21 1 21 4 V13 M21 13 V7 Q21 4 24 4 Q26 4 26 7 V18 Q26 28 16 28 Q8 28 4 20 L1 13 Q0 10 3 10 Q5 10 6 14" fill="#8c8c8c"/></svg>
<svg class="a" style="left:4146px;top:208px" width="28" height="28" viewBox="0 0 28 28"><path d="M14 0 L4 10 H24 Z M14 28 L4 18 H24 Z" fill="#8c8c8c"/><rect x="12" y="8" width="4" height="12" fill="#8c8c8c"/></svg>
<svg class="a" style="left:4186px;top:208px" width="28" height="28" viewBox="0 0 28 28"><path d="M9 3 A12 12 0 1 0 23 6" stroke="#8c8c8c" stroke-width="3" fill="none"/><circle cx="14" cy="15" r="4" fill="#8c8c8c"/><circle cx="22" cy="4" r="3" fill="#8c8c8c"/></svg>
<svg class="a" style="left:4226px;top:208px" width="28" height="28" viewBox="0 0 28 28"><rect x="1.5" y="1.5" width="25" height="25" rx="2" fill="none" stroke="#8c8c8c" stroke-width="3"/><path d="M3 12 H16 V26" stroke="#8c8c8c" stroke-width="3" fill="none"/></svg>
<div class="a" style="left:73px;top:243px;width:4189px;height:2080px;background:#1e1e1e;"></div>
<div class="a" style="left:75px;top:244px;width:4185px;height:2076px;background:#5c5c5c;overflow:hidden">
 <div class="a" style="left:2px;top:2px;width:4181px;height:2072px;background:linear-gradient(90deg,#c6c6c6,#ababab)"></div>
 <div class="a" style="left:2px;top:2px;width:4181px;height:2072px;background:linear-gradient(90deg,#b4b4b4,#a7a7a7);-webkit-mask-image:linear-gradient(transparent,#000)"></div>
 <div class="a" style="left:2px;top:2px;width:4181px;height:2072px;background:radial-gradient(ellipse 2300px 1400px at 1850px 1250px,rgba(255,255,255,0.045),rgba(255,255,255,0) 100%)"></div>
 <svg class="a" style="left:2px;top:2px" width="4181" height="2072" viewBox="77 246 4181 2072">
  <defs><linearGradient id="bandg" gradientUnits="userSpaceOnUse" x1="78" y1="0" x2="4262" y2="0">
   <stop offset="0" stop-color="#4a4a4a"/><stop offset="0.45" stop-color="#474747"/><stop offset="0.7" stop-color="#3e3e3e"/><stop offset="1" stop-color="#363636"/></linearGradient></defs>
<polygon points="78.0,1324.6 240.0,1279.0 508.0,1203.0 758.0,1134.0 816.0,1116.0 1043.7,1095.6 1324.6,1072.4 1470.0,1059.4 1584.4,1049.3 1830.0,1027.8 1846.0,1026.6 1878.0,1028.3 1888.0,1029.7 2113.0,1054.3 2170.0,1060.0 2369.8,1082.0 2634.8,1109.5 2844.8,1131.8 2870.0,1139.0 3141.6,1223.0 3388.0,1298.5 3560.0,1352.2 3803.3,1425.7 3909.7,1482.5 4122.6,1599.0 4262.0,1668.0 4262.0,1949.0 4158.0,1867.6 4102.3,1839.8 3919.9,1726.8 3729.8,1623.4 3570.0,1549.0 3536.4,1531.7 3427.8,1485.7 3339.0,1449.5 3138.0,1378.0 2933.4,1316.6 2870.0,1301.0 2726.0,1265.0 2679.7,1254.8 2517.5,1225.3 2306.0,1196.3 2170.0,1185.5 2091.2,1178.8 1876.9,1171.5 1846.5,1171.5 1659.7,1174.4 1470.0,1188.8 1441.9,1190.6 1223.0,1216.6 1059.6,1246.0 1006.0,1254.8 787.4,1304.0 770.0,1310.0 569.8,1366.0 356.0,1438.6 283.7,1469.4 138.8,1522.0 78.0,1551.0" fill="url(#bandg)"/>
<polyline points="78.0,1305.7 196.8,1268.4 472.0,1190.5 769.0,1125.4 1024.8,1082.5 1300.0,1049.0 1470.0,1037.5 1585.8,1028.8 1771.0,1026.7 1846.5,1025.3 1904.0,1027.6 2115.8,1035.4 2170.0,1039.7 2384.3,1059.4 2647.8,1095.0 2807.0,1126.8 2870.0,1137.3 3170.6,1208.7 3426.0,1286.5 3570.0,1337.2 3676.6,1376.0 3803.3,1425.7 3925.0,1480.0 4168.0,1595.0 4262.0,1646.0" fill="none" stroke="#121212" stroke-width="2.0" stroke-linejoin="round" shape-rendering="crispEdges"/>
<polyline points="78.0,1324.6 240.0,1279.0 508.0,1203.0 758.0,1134.0 816.0,1116.0 1043.7,1095.6 1324.6,1072.4 1470.0,1059.4 1584.4,1049.3 1830.0,1027.8 1846.0,1026.6 1878.0,1028.3 1888.0,1029.7 2113.0,1054.3 2170.0,1060.0 2369.8,1082.0 2634.8,1109.5 2844.8,1131.8 2870.0,1139.0 3141.6,1223.0 3388.0,1298.5 3560.0,1352.2 3803.3,1425.7 3909.7,1482.5 4122.6,1599.0 4262.0,1668.0" fill="none" stroke="#121212" stroke-width="2.0" stroke-linejoin="round" shape-rendering="crispEdges"/>
<polyline points="78.0,1348.0 265.6,1286.5 530.0,1212.0 770.0,1159.5 796.0,1153.0 1062.5,1107.7 1470.0,1066.0 1588.7,1057.7 1850.8,1052.8 2110.0,1061.5 2170.0,1067.3 2369.8,1085.4 2626.0,1120.2 2870.0,1166.5 3127.0,1229.7 3375.2,1304.6 3560.0,1371.0 3854.0,1488.5 4087.0,1600.0 4262.0,1695.0" fill="none" stroke="#121212" stroke-width="2.0" stroke-linejoin="round" shape-rendering="crispEdges"/>
<polyline points="78.0,1551.0 138.8,1522.0 283.7,1469.4 356.0,1438.6 569.8,1366.0 770.0,1310.0 787.4,1304.0 1006.0,1254.8 1059.6,1246.0 1223.0,1216.6 1441.9,1190.6 1470.0,1188.8 1659.7,1174.4 1846.5,1171.5 1876.9,1171.5 2091.2,1178.8 2170.0,1185.5 2306.0,1196.3 2517.5,1225.3 2679.7,1254.8 2726.0,1265.0 2870.0,1301.0 2933.4,1316.6 3138.0,1378.0 3339.0,1449.5 3427.8,1485.7 3536.4,1531.7 3570.0,1549.0 3729.8,1623.4 3919.9,1726.8 4102.3,1839.8 4158.0,1867.6 4262.0,1949.0" fill="none" stroke="#121212" stroke-width="2.0" stroke-linejoin="round" shape-rendering="crispEdges"/>
<polyline points="78.0,1563.6 283.7,1469.4 770.0,1328.5 1059.6,1244.7 1470.0,1208.3 1846.5,1173.0 1875.0,1172.4 2039.0,1189.8 2170.0,1202.5 2633.0,1251.4 2679.7,1254.8 2870.0,1315.2 3337.0,1450.6 3427.8,1485.7 3570.0,1560.7 3729.8,1645.7 4137.8,1860.0 4262.0,1961.0" fill="none" stroke="#121212" stroke-width="2.0" stroke-linejoin="round" shape-rendering="crispEdges"/>
<polyline points="78.0,1388.0 356.0,1438.6" fill="none" stroke="#121212" stroke-width="2.0" shape-rendering="crispEdges"/>
<polyline points="78.0,1515.8 138.8,1522.0" fill="none" stroke="#121212" stroke-width="2.0" shape-rendering="crispEdges"/>
<polyline points="240.0,1279.0 265.6,1286.5 569.8,1366.0" fill="none" stroke="#121212" stroke-width="2.0" shape-rendering="crispEdges"/>
<polyline points="508.0,1203.0 530.0,1212.0 787.4,1304.0" fill="none" stroke="#121212" stroke-width="2.0" shape-rendering="crispEdges"/>
<polyline points="752.0,1135.5 796.0,1153.0 1006.0,1254.8" fill="none" stroke="#121212" stroke-width="2.0" shape-rendering="crispEdges"/>
<polyline points="1043.7,1095.6 1062.5,1107.7 1223.0,1216.6" fill="none" stroke="#121212" stroke-width="2.0" shape-rendering="crispEdges"/>
<polyline points="1324.6,1072.4 1441.9,1190.6" fill="none" stroke="#121212" stroke-width="2.0" shape-rendering="crispEdges"/>
<polyline points="1584.4,1049.3 1588.7,1057.7 1659.7,1174.4" fill="none" stroke="#121212" stroke-width="2.0" shape-rendering="crispEdges"/>
<polyline points="1846.5,1025.9 1850.8,1052.8 1876.9,1171.5" fill="none" stroke="#121212" stroke-width="2.0" shape-rendering="crispEdges"/>
<polyline points="2113.0,1054.3 2110.0,1061.5 2091.2,1178.8" fill="none" stroke="#121212" stroke-width="2.0" shape-rendering="crispEdges"/>
<polyline points="2369.8,1082.0 2306.0,1196.3" fill="none" stroke="#121212" stroke-width="2.0" shape-rendering="crispEdges"/>
<polyline points="2634.8,1109.5 2626.0,1120.2 2517.5,1225.3" fill="none" stroke="#121212" stroke-width="2.0" shape-rendering="crispEdges"/>
<polyline points="2906.0,1150.7 2870.0,1172.4 2726.0,1265.0" fill="none" stroke="#121212" stroke-width="2.0" shape-rendering="crispEdges"/>
<polyline points="3141.6,1223.0 3127.0,1229.7 2933.4,1316.6" fill="none" stroke="#121212" stroke-width="2.0" shape-rendering="crispEdges"/>
<polyline points="3388.0,1298.5 3375.2,1304.6 3138.0,1378.0" fill="none" stroke="#121212" stroke-width="2.0" shape-rendering="crispEdges"/>
<polyline points="3656.0,1380.0 3615.8,1392.0 3339.0,1449.5" fill="none" stroke="#121212" stroke-width="2.0" shape-rendering="crispEdges"/>
<polyline points="3909.7,1482.5 3854.0,1488.5 3536.4,1531.7" fill="none" stroke="#121212" stroke-width="2.0" shape-rendering="crispEdges"/>
<polyline points="4122.6,1599.0 4087.0,1600.0 3729.8,1623.4" fill="none" stroke="#121212" stroke-width="2.0" shape-rendering="crispEdges"/>
<polyline points="4262.0,1724.7 3919.9,1726.8" fill="none" stroke="#121212" stroke-width="2.0" shape-rendering="crispEdges"/>
<polyline points="4262.0,1847.6 4102.3,1839.8" fill="none" stroke="#121212" stroke-width="2.0" shape-rendering="crispEdges"/>
<polyline points="283.7,1469.4 229.0,2319.0" fill="none" stroke="#121212" stroke-width="2.0" shape-rendering="crispEdges"/>
<polyline points="2039.0,1189.8 2036.0,2319.0" fill="none" stroke="#121212" stroke-width="2.0" shape-rendering="crispEdges"/>
<polyline points="3729.8,1645.7 3764.0,2319.0" fill="none" stroke="#121212" stroke-width="2.0" shape-rendering="crispEdges"/>

  <polygon points="1745.8,2268.1 1762.9,2275.3 1739.4,2306.9" fill="#e0b87a"/>
  <circle cx="2711" cy="875" r="23" fill="none" stroke="#f4f4f4" stroke-width="2"/>
 </svg>
 <div class="a" style="left:2px;top:2px;width:251px;height:2072px;background:rgba(0,0,0,0.22)"></div>
 <div class="a" style="left:3933px;top:2px;width:250px;height:2072px;background:rgba(0,0,0,0.22)"></div>
</div>
<div class="a" style="left:82px;top:250px;width:134px;height:32px;background:rgba(110,110,110,0.55);border-radius:3px"></div>
<div class="t" style="left:87px;top:256px;font-size:22px;color:#ececec;letter-spacing:0.80px;">Perspective</div>
<div class="a" style="left:2062px;top:250px;width:208px;height:32px;background:rgba(110,110,110,0.55);border-radius:3px"></div>
<div class="t" style="left:2067px;top:256px;font-size:22px;color:#ececec;letter-spacing:0.62px;">Default Camera</div>
<svg class="a" style="left:2234px;top:254px" width="36" height="24" viewBox="0 0 36 24"><rect x="2" y="4" width="12" height="6" fill="#8d93b4"/><rect x="2" y="10" width="14" height="9" fill="none" stroke="#aab0d6" stroke-width="2"/><path d="M18 14 L25 9 V19 Z" fill="#aab0d6"/><rect x="0" y="13" width="10" height="10" rx="2" fill="#111"/></svg>
<div class="a" style="left:82px;top:921px;width:191px;height:31px;background:rgba(110,110,110,0.55);border-radius:3px"></div>
<div class="t" style="left:87px;top:926px;font-size:22px;color:#ececec;letter-spacing:0.69px;">Live Selection</div>
<svg class="a" style="left:240px;top:922px" width="28" height="28" viewBox="0 0 28 28"><circle cx="14" cy="14" r="11" fill="none" stroke="#d8903a" stroke-width="2" stroke-dasharray="2 3.2"/><path d="M12 9 L18 14.5 L12 17 Z" fill="#bdbdbd"/></svg>
<div class="a" style="left:3973px;top:2280px;width:279px;height:31px;background:rgba(110,110,110,0.55);border-radius:3px"></div>
<div class="t" style="left:3978px;top:2285px;font-size:22px;color:#ececec;letter-spacing:0.86px;">Grid Spacing : 5000 cm</div>
<svg class="a" style="left:4160px;top:250px" width="100" height="100" viewBox="0 0 100 100"><path d="M29 29 V65" stroke="#3ddc64" stroke-width="2.2"/><path d="M29 65 H65" stroke="#e84040" stroke-width="2.2"/><path d="M29 65 L25 70" stroke="#3080ff" stroke-width="2.2"/><path d="M23 4 L29 12 L35 4 M29 12 V20" stroke="#3ddc64" stroke-width="2.2" fill="none"/><path d="M75 58 L88 74 M88 58 L75 74" stroke="#e84040" stroke-width="2.2"/><path d="M15 76 H27 L15 91 H27" stroke="#3080ff" stroke-width="2.2" fill="none"/></svg>
<div class="a" style="left:75px;top:2318px;width:4190px;height:2px;background:#5e5e5e;"></div>
<div class="a" style="left:75px;top:2320px;width:4185px;height:112px;background:#2a2a2a;"></div>
<div class="a" style="left:73px;top:2320px;width:4189px;height:2px;background:#1e1e1e;"></div>
<div class="a" style="left:92px;top:2356px;width:3996px;height:2px;background:#343434;"></div>
<div class="a" style="left:74px;top:2327px;width:12px;height:42px;background-image:linear-gradient(90deg,transparent 2px,#4c4c4c 2px,#4c4c4c 4px,transparent 4px);background-size:6px 6px"></div>
<div class="a" style="left:74px;top:2327px;width:12px;height:42px;background-image:linear-gradient(#2a2a2a 2px,transparent 2px,transparent 4px,#2a2a2a 4px);background-size:6px 6px"></div>
<div class="a" style="left:74px;top:2383px;width:12px;height:42px;background-image:linear-gradient(90deg,transparent 2px,#4c4c4c 2px,#4c4c4c 4px,transparent 4px);background-size:6px 6px"></div>
<div class="a" style="left:74px;top:2383px;width:12px;height:42px;background-image:linear-gradient(#2a2a2a 2px,transparent 2px,transparent 4px,#2a2a2a 4px);background-size:6px 6px"></div>
<div class="a" style="left:118px;top:2362px;width:2px;height:8px;background:#9a9a9a;"></div>
<div class="a" style="left:162px;top:2362px;width:2px;height:5px;background:#8a8a8a;"></div>
<div class="a" style="left:206px;top:2362px;width:2px;height:8px;background:#9a9a9a;"></div>
<div class="a" style="left:249px;top:2362px;width:2px;height:5px;background:#8a8a8a;"></div>
<div class="a" style="left:293px;top:2362px;width:2px;height:8px;background:#9a9a9a;"></div>
<div class="a" style="left:337px;top:2362px;width:2px;height:5px;background:#8a8a8a;"></div>
<div class="a" style="left:381px;top:2362px;width:2px;height:8px;background:#9a9a9a;"></div>
<div class="a" style="left:425px;top:2362px;width:2px;height:5px;background:#8a8a8a;"></div>
<div class="a" style="left:468px;top:2362px;width:2px;height:8px;background:#9a9a9a;"></div>
<div class="a" style="left:512px;top:2362px;width:2px;height:5px;background:#8a8a8a;"></div>
<div class="a" style="left:556px;top:2362px;width:2px;height:8px;background:#9a9a9a;"></div>
<div class="a" style="left:600px;top:2362px;width:2px;height:5px;background:#8a8a8a;"></div>
<div class="a" style="left:644px;top:2362px;width:2px;height:8px;background:#9a9a9a;"></div>
<div class="a" style="left:688px;top:2362px;width:2px;height:5px;background:#8a8a8a;"></div>
<div class="a" style="left:731px;top:2362px;width:2px;height:8px;background:#9a9a9a;"></div>
<div class="a" style="left:775px;top:2362px;width:2px;height:5px;background:#8a8a8a;"></div>
<div class="a" style="left:819px;top:2362px;width:2px;height:8px;background:#9a9a9a;"></div>
<div class="a" style="left:863px;top:2362px;width:2px;height:5px;background:#8a8a8a;"></div>
<div class="a" style="left:907px;top:2362px;width:2px;height:8px;background:#9a9a9a;"></div>
<div class="a" style="left:950px;top:2362px;width:2px;height:5px;background:#8a8a8a;"></div>
<div class="a" style="left:994px;top:2362px;width:2px;height:8px;background:#9a9a9a;"></div>
<div class="a" style="left:1038px;top:2362px;width:2px;height:5px;background:#8a8a8a;"></div>
<div class="a" style="left:1082px;top:2362px;width:2px;height:8px;background:#9a9a9a;"></div>
<div class="a" style="left:1126px;top:2362px;width:2px;height:5px;background:#8a8a8a;"></div>
<div class="a" style="left:1169px;top:2362px;width:2px;height:8px;background:#9a9a9a;"></div>
<div class="a" style="left:1213px;top:2362px;width:2px;height:5px;background:#8a8a8a;"></div>
<div class="a" style="left:1257px;top:2362px;width:2px;height:8px;background:#9a9a9a;"></div>
<div class="a" style="left:1301px;top:2362px;width:2px;height:5px;background:#8a8a8a;"></div>
<div class="a" style="left:1345px;top:2362px;width:2px;height:8px;background:#9a9a9a;"></div>
<div class="a" style="left:1388px;top:2362px;width:2px;height:5px;background:#8a8a8a;"></div>
<div class="a" style="left:1432px;top:2362px;width:2px;height:8px;background:#9a9a9a;"></div>
<div class="a" style="left:1476px;top:2362px;width:2px;height:5px;background:#8a8a8a;"></div>
<div class="a" style="left:1520px;top:2362px;width:2px;height:8px;background:#9a9a9a;"></div>
<div class="a" style="left:1564px;top:2362px;width:2px;height:5px;background:#8a8a8a;"></div>
<div class="a" style="left:1608px;top:2362px;width:2px;height:8px;background:#9a9a9a;"></div>
<div class="a" style="left:1651px;top:2362px;width:2px;height:5px;background:#8a8a8a;"></div>
<div class="a" style="left:1695px;top:2362px;width:2px;height:8px;background:#9a9a9a;"></div>
<div class="a" style="left:1739px;top:2362px;width:2px;height:5px;background:#8a8a8a;"></div>
<div class="a" style="left:1783px;top:2362px;width:2px;height:8px;background:#9a9a9a;"></div>
<div class="a" style="left:1827px;top:2362px;width:2px;height:5px;background:#8a8a8a;"></div>
<div class="a" style="left:1870px;top:2362px;width:2px;height:8px;background:#9a9a9a;"></div>
<div class="a" style="left:1914px;top:2362px;width:2px;height:5px;background:#8a8a8a;"></div>
<div class="a" style="left:1958px;top:2362px;width:2px;height:8px;background:#9a9a9a;"></div>
<div class="a" style="left:2002px;top:2362px;width:2px;height:5px;background:#8a8a8a;"></div>
<div class="a" style="left:2046px;top:2362px;width:2px;height:8px;background:#9a9a9a;"></div>
<div class="a" style="left:2089px;top:2362px;width:2px;height:5px;background:#8a8a8a;"></div>
<div class="a" style="left:2133px;top:2362px;width:2px;height:8px;background:#9a9a9a;"></div>
<div class="a" style="left:2177px;top:2362px;width:2px;height:5px;background:#8a8a8a;"></div>
<div class="a" style="left:2221px;top:2362px;width:2px;height:8px;background:#9a9a9a;"></div>
<div class="a" style="left:2265px;top:2362px;width:2px;height:5px;background:#8a8a8a;"></div>
<div class="a" style="left:2308px;top:2362px;width:2px;height:8px;background:#9a9a9a;"></div>
<div class="a" style="left:2352px;top:2362px;width:2px;height:5px;background:#8a8a8a;"></div>
<div class="a" style="left:2396px;top:2362px;width:2px;height:8px;background:#9a9a9a;"></div>
<div class="a" style="left:2440px;top:2362px;width:2px;height:5px;background:#8a8a8a;"></div>
<div class="a" style="left:2484px;top:2362px;width:2px;height:8px;background:#9a9a9a;"></div>
<div class="a" style="left:2528px;top:2362px;width:2px;height:5px;background:#8a8a8a;"></div>
<div class="a" style="left:2571px;top:2362px;width:2px;height:8px;background:#9a9a9a;"></div>
<div class="a" style="left:2615px;top:2362px;width:2px;height:5px;background:#8a8a8a;"></div>
<div class="a" style="left:2659px;top:2362px;width:2px;height:8px;background:#9a9a9a;"></div>
<div class="a" style="left:2703px;top:2362px;width:2px;height:5px;background:#8a8a8a;"></div>
<div class="a" style="left:2747px;top:2362px;width:2px;height:8px;background:#9a9a9a;"></div>
<div class="a" style="left:2790px;top:2362px;width:2px;height:5px;background:#8a8a8a;"></div>
<div class="a" style="left:2834px;top:2362px;width:2px;height:8px;background:#9a9a9a;"></div>
<div class="a" style="left:2878px;top:2362px;width:2px;height:5px;background:#8a8a8a;"></div>
<div class="a" style="left:2922px;top:2362px;width:2px;height:8px;background:#9a9a9a;"></div>
<div class="a" style="left:2966px;top:2362px;width:2px;height:5px;background:#8a8a8a;"></div>
<div class="a" style="left:3009px;top:2362px;width:2px;height:8px;background:#9a9a9a;"></div>
<div class="a" style="left:3053px;top:2362px;width:2px;height:5px;background:#8a8a8a;"></div>
<div class="a" style="left:3097px;top:2362px;width:2px;height:8px;background:#9a9a9a;"></div>
<div class="a" style="left:3141px;top:2362px;width:2px;height:5px;background:#8a8a8a;"></div>
<div class="a" style="left:3185px;top:2362px;width:2px;height:8px;background:#9a9a9a;"></div>
<div class="a" style="left:3229px;top:2362px;width:2px;height:5px;background:#8a8a8a;"></div>
<div class="a" style="left:3272px;top:2362px;width:2px;height:8px;background:#9a9a9a;"></div>
<div class="a" style="left:3316px;top:2362px;width:2px;height:5px;background:#8a8a8a;"></div>
<div class="a" style="left:3360px;top:2362px;width:2px;height:8px;background:#9a9a9a;"></div>
<div class="a" style="left:3404px;top:2362px;width:2px;height:5px;background:#8a8a8a;"></div>
<div class="a" style="left:3448px;top:2362px;width:2px;height:8px;background:#9a9a9a;"></div>
<div class="a" style="left:3491px;top:2362px;width:2px;height:5px;background:#8a8a8a;"></div>
<div class="a" style="left:3535px;top:2362px;width:2px;height:8px;background:#9a9a9a;"></div>
<div class="a" style="left:3579px;top:2362px;width:2px;height:5px;background:#8a8a8a;"></div>
<div class="a" style="left:3623px;top:2362px;width:2px;height:8px;background:#9a9a9a;"></div>
<div class="a" style="left:3667px;top:2362px;width:2px;height:5px;background:#8a8a8a;"></div>
<div class="a" style="left:3710px;top:2362px;width:2px;height:8px;background:#9a9a9a;"></div>
<div class="a" style="left:3754px;top:2362px;width:2px;height:5px;background:#8a8a8a;"></div>
<div class="a" style="left:3798px;top:2362px;width:2px;height:8px;background:#9a9a9a;"></div>
<div class="a" style="left:3842px;top:2362px;width:2px;height:5px;background:#8a8a8a;"></div>
<div class="a" style="left:3886px;top:2362px;width:2px;height:8px;background:#9a9a9a;"></div>
<div class="a" style="left:3929px;top:2362px;width:2px;height:5px;background:#8a8a8a;"></div>
<div class="a" style="left:3973px;top:2362px;width:2px;height:8px;background:#9a9a9a;"></div>
<div class="a" style="left:4017px;top:2362px;width:2px;height:5px;background:#8a8a8a;"></div>
<div class="a" style="left:4061px;top:2362px;width:2px;height:8px;background:#9a9a9a;"></div>
<div class="t" style="left:164.1px;top:2327px;width:80px;text-align:center;font-size:22px;color:#a8a8a8">2</div>
<div class="t" style="left:251.7px;top:2327px;width:80px;text-align:center;font-size:22px;color:#a8a8a8">4</div>
<div class="t" style="left:339.4px;top:2327px;width:80px;text-align:center;font-size:22px;color:#a8a8a8">6</div>
<div class="t" style="left:427.0px;top:2327px;width:80px;text-align:center;font-size:22px;color:#a8a8a8">8</div>
<div class="t" style="left:514.6px;top:2327px;width:80px;text-align:center;font-size:22px;color:#a8a8a8">10</div>
<div class="t" style="left:602.2px;top:2327px;width:80px;text-align:center;font-size:22px;color:#a8a8a8">12</div>
<div class="t" style="left:689.8px;top:2327px;width:80px;text-align:center;font-size:22px;color:#a8a8a8">14</div>
<div class="t" style="left:777.5px;top:2327px;width:80px;text-align:center;font-size:22px;color:#a8a8a8">16</div>
<div class="t" style="left:865.1px;top:2327px;width:80px;text-align:center;font-size:22px;color:#a8a8a8">18</div>
<div class="t" style="left:952.7px;top:2327px;width:80px;text-align:center;font-size:22px;color:#a8a8a8">20</div>
<div class="t" style="left:1040.3px;top:2327px;width:80px;text-align:center;font-size:22px;color:#a8a8a8">22</div>
<div class="t" style="left:1127.9px;top:2327px;width:80px;text-align:center;font-size:22px;color:#a8a8a8">24</div>
<div class="t" style="left:1215.6px;top:2327px;width:80px;text-align:center;font-size:22px;color:#a8a8a8">26</div>
<div class="t" style="left:1303.2px;top:2327px;width:80px;text-align:center;font-size:22px;color:#a8a8a8">28</div>
<div class="t" style="left:1390.8px;top:2327px;width:80px;text-align:center;font-size:22px;color:#a8a8a8">30</div>
<div class="t" style="left:1478.4px;top:2327px;width:80px;text-align:center;font-size:22px;color:#a8a8a8">32</div>
<div class="t" style="left:1566.0px;top:2327px;width:80px;text-align:center;font-size:22px;color:#a8a8a8">34</div>
<div class="t" style="left:1653.7px;top:2327px;width:80px;text-align:center;font-size:22px;color:#a8a8a8">36</div>
<div class="t" style="left:1741.3px;top:2327px;width:80px;text-align:center;font-size:22px;color:#a8a8a8">38</div>
<div class="t" style="left:1828.9px;top:2327px;width:80px;text-align:center;font-size:22px;color:#a8a8a8">40</div>
<div class="t" style="left:1916.5px;top:2327px;width:80px;text-align:center;font-size:22px;color:#a8a8a8">42</div>
<div class="t" style="left:2004.1px;top:2327px;width:80px;text-align:center;font-size:22px;color:#a8a8a8">44</div>
<div class="t" style="left:2091.8px;top:2327px;width:80px;text-align:center;font-size:22px;color:#a8a8a8">46</div>
<div class="t" style="left:2179.4px;top:2327px;width:80px;text-align:center;font-size:22px;color:#a8a8a8">48</div>
<div class="t" style="left:2267.0px;top:2327px;width:80px;text-align:center;font-size:22px;color:#a8a8a8">50</div>
<div class="t" style="left:2354.6px;top:2327px;width:80px;text-align:center;font-size:22px;color:#a8a8a8">52</div>
<div class="t" style="left:2442.2px;top:2327px;width:80px;text-align:center;font-size:22px;color:#a8a8a8">54</div>
<div class="t" style="left:2529.9px;top:2327px;width:80px;text-align:center;font-size:22px;color:#a8a8a8">56</div>
<div class="t" style="left:2617.5px;top:2327px;width:80px;text-align:center;font-size:22px;color:#a8a8a8">58</div>
<div class="t" style="left:2705.1px;top:2327px;width:80px;text-align:center;font-size:22px;color:#a8a8a8">60</div>
<div class="t" style="left:2792.7px;top:2327px;width:80px;text-align:center;font-size:22px;color:#a8a8a8">62</div>
<div class="t" style="left:2880.3px;top:2327px;width:80px;text-align:center;font-size:22px;color:#a8a8a8">64</div>
<div class="t" style="left:2968.0px;top:2327px;width:80px;text-align:center;font-size:22px;color:#a8a8a8">66</div>
<div class="t" style="left:3055.6px;top:2327px;width:80px;text-align:center;font-size:22px;color:#a8a8a8">68</div>
<div class="t" style="left:3143.2px;top:2327px;width:80px;text-align:center;font-size:22px;color:#a8a8a8">70</div>
<div class="t" style="left:3230.8px;top:2327px;width:80px;text-align:center;font-size:22px;color:#a8a8a8">72</div>
<div class="t" style="left:3318.4px;top:2327px;width:80px;text-align:center;font-size:22px;color:#a8a8a8">74</div>
<div class="t" style="left:3406.1px;top:2327px;width:80px;text-align:center;font-size:22px;color:#a8a8a8">76</div>
<div class="t" style="left:3493.7px;top:2327px;width:80px;text-align:center;font-size:22px;color:#a8a8a8">78</div>
<div class="t" style="left:3581.3px;top:2327px;width:80px;text-align:center;font-size:22px;color:#a8a8a8">80</div>
<div class="t" style="left:3668.9px;top:2327px;width:80px;text-align:center;font-size:22px;color:#a8a8a8">82</div>
<div class="t" style="left:3756.5px;top:2327px;width:80px;text-align:center;font-size:22px;color:#a8a8a8">84</div>
<div class="t" style="left:3844.2px;top:2327px;width:80px;text-align:center;font-size:22px;color:#a8a8a8">86</div>
<div class="t" style="left:3931.8px;top:2327px;width:80px;text-align:center;font-size:22px;color:#a8a8a8">88</div>
<div class="t" style="left:4019.4px;top:2327px;width:80px;text-align:center;font-size:22px;color:#a8a8a8">90</div>
<div class="a" style="left:110px;top:2326px;width:18px;height:30px;background:#6b72b8;"></div>
<div class="t" style="left:130px;top:2327px;font-size:22px;color:#7f86d0;">0</div>
<div class="a" style="left:118px;top:2356px;width:2px;height:14px;background:#9a9a9a;"></div>
<div class="a" style="left:4062px;top:2328px;width:2px;height:42px;background:#8e8e8e;"></div>
<div class="a" style="left:1432px;top:2328px;width:2px;height:42px;background:#8e8e8e;"></div>
<div class="a" style="left:2747px;top:2328px;width:2px;height:42px;background:#8e8e8e;"></div>
<div class="a" style="left:4094px;top:2332px;width:166px;height:34px;background:#1b1b1b;border-radius:7px"></div>
<div class="t" style="left:4160px;top:2338px;font-size:22px;color:#e0e0e0;">0 F</div>
<div class="a" style="left:92px;top:2386px;width:166px;height:34px;background:#1b1b1b;border-radius:7px"></div>
<div class="t" style="left:158px;top:2392px;font-size:22px;color:#e0e0e0;">0 F</div>
<div class="a" style="left:274px;top:2386px;width:2726px;height:34px;background:#3c3c3c;border-radius:6px"></div>
<svg class="a" style="left:280px;top:2392px" width="14" height="24" viewBox="0 0 14 24"><path d="M2 0 V22 M6 0 V22 M10 0 V22" stroke="#5c5c5c" stroke-width="1.6"/></svg>
<div class="t" style="left:304px;top:2392px;font-size:22px;color:#d0d0d0;">0 F</div>
<div class="t" style="left:2919px;top:2392px;font-size:22px;color:#bcbcbc;">90 F</div>
<svg class="a" style="left:2980px;top:2392px" width="14" height="24" viewBox="0 0 14 24"><path d="M2 0 V22 M6 0 V22 M10 0 V22" stroke="#5c5c5c" stroke-width="1.6"/></svg>
<div class="a" style="left:3014px;top:2386px;width:166px;height:34px;background:#1b1b1b;border-radius:7px"></div>
<div class="t" style="left:3073px;top:2392px;font-size:22px;color:#e0e0e0;">90 F</div>
<div class="a" style="left:3202px;top:2374px;width:56px;height:56px;background:#3b3b3b;border-radius:7px"></div>
<svg class="a" style="left:3202px;top:2374px" width="56" height="56" viewBox="0 0 56 56"><rect x="11" y="15" width="4" height="26" fill="#b0b0b0"/><path d="M16 28 L36 15 V41 Z" fill="#b0b0b0"/></svg>
<div class="a" style="left:3278px;top:2374px;width:280px;height:56px;background:#3b3b3b;border-radius:7px"></div>
<svg class="a" style="left:3278px;top:2374px" width="56" height="56" viewBox="0 0 56 56"><path d="M10 28 L17 21 L24 28 L17 35 Z" fill="none" stroke="#b0b0b0" stroke-width="2.6"/><path d="M26 28 L46 15 V41 Z" fill="#b0b0b0"/></svg>
<div class="a" style="left:3333px;top:2377px;width:2px;height:50px;background:#2f2f2f;"></div>
<svg class="a" style="left:3334px;top:2374px" width="56" height="56" viewBox="0 0 56 56"><path d="M11 28 L31 15 V41 Z" fill="#b0b0b0"/><rect x="34" y="15" width="4" height="26" fill="#b0b0b0"/></svg>
<div class="a" style="left:3389px;top:2377px;width:2px;height:50px;background:#2f2f2f;"></div>
<svg class="a" style="left:3390px;top:2374px" width="56" height="56" viewBox="0 0 56 56"><path d="M18 14 L44 28 L18 42 Z" fill="#b0b0b0"/></svg>
<div class="a" style="left:3445px;top:2377px;width:2px;height:50px;background:#2f2f2f;"></div>
<svg class="a" style="left:3446px;top:2374px" width="56" height="56" viewBox="0 0 56 56"><rect x="18" y="15" width="4" height="26" fill="#b0b0b0"/><path d="M25 28 L45 15 V41 Z" fill="#b0b0b0" transform="scale(-1 1) translate(-70 0)"/></svg>
<div class="a" style="left:3501px;top:2377px;width:2px;height:50px;background:#2f2f2f;"></div>
<svg class="a" style="left:3502px;top:2374px" width="56" height="56" viewBox="0 0 56 56"><path d="M10 15 L30 28 L10 41 Z" fill="#b0b0b0"/><path d="M32 28 L39 21 L46 28 L39 35 Z" fill="none" stroke="#b0b0b0" stroke-width="2.6"/></svg>
<div class="a" style="left:3578px;top:2374px;width:56px;height:56px;background:#3b3b3b;border-radius:7px"></div>
<svg class="a" style="left:3578px;top:2374px" width="56" height="56" viewBox="0 0 56 56"><rect x="41" y="15" width="4" height="26" fill="#b0b0b0"/><path d="M40 28 L20 15 V41 Z" fill="#b0b0b0"/></svg>
<div class="a" style="left:3654px;top:2374px;width:112px;height:56px;background:#3b3b3b;border-radius:7px"></div>
<svg class="a" style="left:3654px;top:2374px" width="56" height="56" viewBox="0 0 56 56"><circle cx="28" cy="28" r="18" fill="#e05a5a"/><path d="M28 18 L38 28 L28 38 L18 28 Z" fill="none" stroke="#2a2a2a" stroke-width="3.2"/></svg>
<svg class="a" style="left:3654px;top:2374px" width="56" height="56" viewBox="0 0 56 56"><path d="M45 55 L55 45 L55 55 Z" fill="#8c8c8c"/></svg>
<div class="a" style="left:3709px;top:2377px;width:2px;height:50px;background:#2f2f2f;"></div>
<svg class="a" style="left:3710px;top:2374px" width="56" height="56" viewBox="0 0 56 56"><circle cx="28" cy="28" r="18" fill="#e05a5a"/><text x="28" y="38" font-size="27" text-anchor="middle" fill="#2a2a2a" font-family="Liberation Sans">A</text></svg>
<div class="a" style="left:3786px;top:2374px;width:56px;height:56px;background:#3b3b3b;border-radius:7px"></div>
<svg class="a" style="left:3786px;top:2374px" width="56" height="56" viewBox="0 0 56 56"><circle cx="28" cy="28" r="18" fill="#b4b4b4"/><circle cx="28" cy="28" r="7" fill="none" stroke="#3b3b3b" stroke-width="4.5"/><rect x="26" y="15" width="4" height="5" fill="#3b3b3b" transform="rotate(0 28 28)"/><rect x="26" y="15" width="4" height="5" fill="#3b3b3b" transform="rotate(45 28 28)"/><rect x="26" y="15" width="4" height="5" fill="#3b3b3b" transform="rotate(90 28 28)"/><rect x="26" y="15" width="4" height="5" fill="#3b3b3b" transform="rotate(135 28 28)"/><rect x="26" y="15" width="4" height="5" fill="#3b3b3b" transform="rotate(180 28 28)"/><rect x="26" y="15" width="4" height="5" fill="#3b3b3b" transform="rotate(225 28 28)"/><rect x="26" y="15" width="4" height="5" fill="#3b3b3b" transform="rotate(270 28 28)"/><rect x="26" y="15" width="4" height="5" fill="#3b3b3b" transform="rotate(315 28 28)"/></svg>
<div class="a" style="left:3850px;top:2374px;width:280px;height:56px;background:#3b3b3b;border-radius:7px"></div>
<svg class="a" style="left:3850px;top:2374px" width="56" height="56" viewBox="0 0 56 56"><path d="M28 21 L35 28 L28 35 L21 28 Z" fill="none" stroke="#b0b0b0" stroke-width="2.6"/><path d="M28 8 L23 14 H33 Z M28 48 L23 42 H33 Z M8 28 L14 23 V33 Z M48 28 L42 23 V33 Z" fill="#b0b0b0"/></svg>
<div class="a" style="left:3905px;top:2377px;width:2px;height:50px;background:#2f2f2f;"></div>
<svg class="a" style="left:3906px;top:2374px" width="56" height="56" viewBox="0 0 56 56"><path d="M19 24 V12 H43 V45 H31" stroke="#b0b0b0" stroke-width="2.8" fill="none"/><path d="M21 33 L28 40 L21 47 L14 40 Z" fill="none" stroke="#b0b0b0" stroke-width="2.6"/><path d="M27 23 H33 V29" stroke="#b0b0b0" stroke-width="2.6" fill="none"/></svg>
<div class="a" style="left:3961px;top:2377px;width:2px;height:50px;background:#2f2f2f;"></div>
<svg class="a" style="left:3962px;top:2374px" width="56" height="56" viewBox="0 0 56 56"><path d="M28 22 L34 28 L28 34 L22 28 Z" fill="none" stroke="#b0b0b0" stroke-width="2.6"/><path d="M28 11 A17 17 0 0 0 18 42 M28 45 A17 17 0 0 0 38 14" stroke="#b0b0b0" stroke-width="2.8" fill="none"/><path d="M14 46 L22 46 L20 38 Z M42 10 L34 10 L36 18 Z" fill="#b0b0b0"/></svg>
<div class="a" style="left:4017px;top:2377px;width:2px;height:50px;background:#2f2f2f;"></div>
<svg class="a" style="left:4018px;top:2374px" width="56" height="56" viewBox="0 0 56 56"><rect x="10" y="14" width="36" height="12" rx="6" fill="#b0b0b0"/><rect x="10" y="30" width="36" height="12" rx="6" fill="#b0b0b0"/><circle cx="18" cy="20" r="3" fill="#3b3b3b"/><circle cx="38" cy="36" r="3" fill="#3b3b3b"/></svg>
<div class="a" style="left:4074px;top:2375px;width:56px;height:54px;background:#525a9c;border-radius:0 6px 6px 0"></div>
<div class="a" style="left:4073px;top:2377px;width:2px;height:50px;background:#2f2f2f;"></div>
<svg class="a" style="left:4074px;top:2374px" width="56" height="56" viewBox="0 0 56 56"><circle cx="22" cy="38" r="7" fill="#b8b8b8"/><path d="M30 20 A7 7 0 0 1 42 24 L36 28 Z" fill="#b8b8b8"/><path d="M13 12 L44 44" stroke="#b8b8b8" stroke-width="3"/><path d="M35 34 L42 42" stroke="#b8b8b8" stroke-width="2"/></svg>
<div class="a" style="left:4150px;top:2374px;width:112px;height:56px;background:#3b3b3b;border-radius:7px"></div>
<svg class="a" style="left:4150px;top:2374px" width="56" height="56" viewBox="0 0 56 56"><path d="M10 22 H17 L27 13 V43 L17 34 H10 Z" fill="#b0b0b0"/><path d="M33 17 Q41 28 33 39" stroke="#b0b0b0" stroke-width="3.2" fill="none"/></svg>
<div class="a" style="left:4206px;top:2375px;width:56px;height:54px;background:#525a9c;border-radius:0 6px 6px 0"></div>
<div class="a" style="left:4205px;top:2377px;width:2px;height:50px;background:#2f2f2f;"></div>
<svg class="a" style="left:4206px;top:2374px" width="56" height="56" viewBox="0 0 56 56"><text x="28" y="30" font-size="22" text-anchor="middle" fill="#c4c4c4" font-family="Liberation Sans">A</text><path d="M14 35 V44 M20 35 V44 M26 35 V44" stroke="#c4c4c4" stroke-width="3"/><rect x="31" y="35" width="12" height="9" fill="#c4c4c4"/></svg>
<svg class="a" style="left:4206px;top:2374px" width="56" height="56" viewBox="0 0 56 56"><path d="M45 55 L55 45 L55 55 Z" fill="#8c8c8c"/></svg>
<div class="a" style="left:75px;top:2432px;width:3520px;height:2px;background:#1e1e1e;"></div>
<div class="a" style="left:75px;top:2434px;width:3520px;height:45px;background:#2a2a2a;"></div>
<div class="a" style="left:75px;top:2478px;width:3520px;height:2px;background:#1f1f1f;"></div>
<div class="a" style="left:75px;top:2480px;width:3520px;height:141px;background:#2a2a2a;"></div>
<div class="a" style="left:75px;top:2620px;width:3517px;height:2px;background:#383838;"></div>
<div class="a" style="left:75px;top:2622px;width:3520px;height:60px;background:#2a2a2a;"></div>
<svg class="a" style="left:88px;top:2445px" width="28" height="22" viewBox="0 0 28 22"><path d="M0 2 H28 M0 10 H28 M0 18 H28" stroke="#8e8e8e" stroke-width="3.2"/></svg>
<div class="t" style="left:136px;top:2442px;font-size:23px;color:#b4b4b4;letter-spacing:0.00px;">Create</div>
<div class="t" style="left:234px;top:2442px;font-size:23px;color:#b4b4b4;letter-spacing:0.00px;">Edit</div>
<div class="t" style="left:304px;top:2442px;font-size:23px;color:#b4b4b4;letter-spacing:-0.33px;">View</div>
<div class="t" style="left:385px;top:2442px;font-size:23px;color:#b4b4b4;letter-spacing:0.20px;">Select</div>
<div class="t" style="left:480px;top:2442px;font-size:23px;color:#b4b4b4;letter-spacing:0.43px;">Material</div>
<div class="t" style="left:594px;top:2442px;font-size:23px;color:#b4b4b4;letter-spacing:0.33px;">Texture</div>
<div class="a" style="left:88px;top:2632px;width:110px;height:37px;background:#383838;border-radius:7px"></div>
<div class="a" style="left:126px;top:2633px;width:34px;height:35px;background:#525a9c;"></div>
<svg class="a" style="left:88px;top:2632px" width="110" height="37" viewBox="0 0 110 37"><path d="M11 12 H14 M11 18 H14 M11 24 H14" stroke="#c8c8c8" stroke-width="3"/><path d="M18 12 H30 M18 18 H30 M18 24 H30" stroke="#c8c8c8" stroke-width="3"/><rect x="43" y="9" width="8" height="8" rx="1.5" fill="#c8c8c8"/><rect x="53" y="9" width="8" height="8" rx="1.5" fill="#c8c8c8"/><rect x="43" y="19" width="8" height="8" rx="1.5" fill="#c8c8c8"/><rect x="53" y="19" width="8" height="8" rx="1.5" fill="#c8c8c8"/><rect x="82" y="7" width="17" height="17" rx="2" fill="#c8c8c8"/><path d="M79 11 V27 H95" stroke="#c8c8c8" stroke-width="2" fill="none"/></svg>
<div class="a" style="left:3441px;top:2649px;width:136px;height:6px;background:#5b62b0;border-radius:3px"></div>
<div class="a" style="left:3573px;top:2642px;width:9px;height:20px;background:#c8c8c8;border-radius:3px"></div>
<div class="a" style="left:3595px;top:2432px;width:3px;height:250px;background:#1e1e1e;"></div>
<div class="a" style="left:3598px;top:2434px;width:664px;height:45px;background:#2a2a2a;"></div>
<svg class="a" style="left:3612px;top:2446px" width="28" height="22" viewBox="0 0 28 22"><path d="M0 2 H28 M0 10 H28 M0 18 H28" stroke="#8e8e8e" stroke-width="3.2"/></svg>
<div class="a" style="left:3676px;top:2440px;width:218px;height:34px;background:#3a3a3a;border-radius:17px"></div>
<div class="t" style="left:3698px;top:2446px;font-size:22px;color:#d4d4d4;letter-spacing:0.71px;">Reset Transform</div>
<div class="a" style="left:3905px;top:2440px;width:200px;height:34px;background:#2e2e2e;border-radius:7px"></div>
<div class="t" style="left:3921px;top:2446px;font-size:22px;color:#6a6a6a;letter-spacing:0.75px;">World</div>
<svg class="a" style="left:4080px;top:2452px" width="16" height="10" viewBox="0 0 16 10"><path d="M0 0 H14 L7 8 Z" fill="#707070"/></svg>
<div class="a" style="left:4116px;top:2440px;width:132px;height:34px;background:#2e2e2e;border-radius:7px"></div>
<div class="t" style="left:4130px;top:2446px;font-size:22px;color:#6a6a6a;letter-spacing:0.50px;">Scale</div>
<svg class="a" style="left:4224px;top:2452px" width="16" height="10" viewBox="0 0 16 10"><path d="M0 0 H14 L7 8 Z" fill="#707070"/></svg>
<div class="a" style="left:3598px;top:2478px;width:664px;height:2px;background:#1f1f1f;"></div>
<div class="t" style="left:3612px;top:2494px;font-size:22px;color:#9a9a9a;">X</div>
<div class="a" style="left:3640px;top:2488px;width:194px;height:33px;background:#1c1c1c;border-radius:6px"></div>
<div class="t" style="left:3674.5px;top:2494px;font-size:22px;color:#dcdcdc;letter-spacing:1.44px;">-5.2492 cm</div>
<div class="a" style="left:3847px;top:2488px;width:193px;height:33px;background:#1c1c1c;border-radius:6px"></div>
<div class="t" style="left:3926px;top:2494px;font-size:22px;color:#dcdcdc;letter-spacing:1.70px;">0 °</div>
<div class="a" style="left:4052px;top:2488px;width:194px;height:33px;background:#1c1c1c;border-radius:6px"></div>
<div class="t" style="left:4052px;top:2494px;width:194px;text-align:center;font-size:22px;color:#dcdcdc">1</div>
<div class="t" style="left:3612px;top:2536px;font-size:22px;color:#9a9a9a;">Y</div>
<div class="a" style="left:3640px;top:2530px;width:194px;height:33px;background:#1c1c1c;border-radius:6px"></div>
<div class="t" style="left:3666px;top:2536px;font-size:22px;color:#dcdcdc;letter-spacing:1.50px;">290.3534 cm</div>
<div class="a" style="left:3847px;top:2530px;width:193px;height:33px;background:#1c1c1c;border-radius:6px"></div>
<div class="t" style="left:3926px;top:2536px;font-size:22px;color:#dcdcdc;letter-spacing:1.70px;">0 °</div>
<div class="a" style="left:4052px;top:2530px;width:194px;height:33px;background:#1c1c1c;border-radius:6px"></div>
<div class="t" style="left:4052px;top:2536px;width:194px;text-align:center;font-size:22px;color:#dcdcdc">1</div>
<div class="t" style="left:3612px;top:2578px;font-size:22px;color:#9a9a9a;">Z</div>
<div class="a" style="left:3640px;top:2572px;width:194px;height:33px;background:#1c1c1c;border-radius:6px"></div>
<div class="t" style="left:3662.5px;top:2578px;font-size:22px;color:#dcdcdc;letter-spacing:1.25px;">-106.4583 cm</div>
<div class="a" style="left:3847px;top:2572px;width:193px;height:33px;background:#1c1c1c;border-radius:6px"></div>
<div class="t" style="left:3926px;top:2578px;font-size:22px;color:#dcdcdc;letter-spacing:1.70px;">0 °</div>
<div class="a" style="left:4052px;top:2572px;width:194px;height:33px;background:#1c1c1c;border-radius:6px"></div>
<div class="t" style="left:4052px;top:2578px;width:194px;text-align:center;font-size:22px;color:#dcdcdc">1</div>
<div class="a" style="left:75px;top:2678px;width:4185px;height:3px;background:#1f1f1f;"></div>
<div class="a" style="left:0px;top:2681px;width:4262px;height:29px;background:#1c1c1c;"></div>
<svg class="a" style="left:10px;top:2697px" width="28" height="14" viewBox="0 0 28 14"><path d="M0 2 H28 M0 10 H28" stroke="#8e8e8e" stroke-width="3.2"/></svg>
<svg class="a" style="left:58px;top:2692px" width="28" height="20" viewBox="0 0 28 20"><circle cx="13" cy="14" r="11" fill="none" stroke="#8e8e8e" stroke-width="2.6"/><path d="M7 13 L12 18 L26 3" stroke="#8e8e8e" stroke-width="2.6" fill="none"/></svg>
<div class="t" style="left:107px;top:2696px;font-size:24px;color:#bcbcbc;letter-spacing:-0.25px;">Live Selection: Click and drag to select elements. Hold down SHIFT to add to the selection, CTRL to remove.</div>
<div class="a" style="left:4261px;top:124px;width:5px;height:2586px;background:#1f1f1f;"></div>
<div class="a" style="left:4265px;top:112px;width:789px;height:12px;background:#2a2a2a;"></div>
<div class="a" style="left:4265px;top:124px;width:789px;height:1214px;background:#2a2a2a;"></div>
<svg class="a" style="left:4278px;top:138px" width="28" height="20" viewBox="0 0 28 20"><path d="M0 2 H28 M0 10 H28 M0 18 H28" stroke="#9a9a9a" stroke-width="3.5"/></svg>
<div class="t" style="left:4327px;top:134px;font-size:22px;color:#b8b8b8;letter-spacing:0.00px;">File</div>
<div class="t" style="left:4393px;top:134px;font-size:22px;color:#b8b8b8;letter-spacing:0.33px;">Edit</div>
<div class="t" style="left:4463px;top:134px;font-size:22px;color:#b8b8b8;letter-spacing:0.33px;">View</div>
<div class="t" style="left:4543px;top:134px;font-size:22px;color:#b8b8b8;letter-spacing:1.00px;">Object</div>
<div class="t" style="left:4640px;top:134px;font-size:22px;color:#b8b8b8;letter-spacing:0.67px;">Tags</div>
<div class="t" style="left:4718px;top:134px;font-size:22px;color:#b8b8b8;letter-spacing:0.75px;">Bookmarks</div>
<svg class="a" style="left:4922px;top:134px" width="30" height="30" viewBox="0 0 30 30"><circle cx="11.3" cy="10.8" r="8.6" fill="none" stroke="#9a9a9a" stroke-width="3.2"/><path d="M17.5 17.5 L25.5 25.5" stroke="#9a9a9a" stroke-width="3.6"/></svg>
<svg class="a" style="left:4962px;top:131px" width="28" height="33" viewBox="0 0 28 33"><path d="M3.5 29.5 V14.5 L14 6 L24.5 14.5 V29.5 Z" fill="none" stroke="#9a9a9a" stroke-width="3.2"/><rect x="11" y="21" width="6" height="8" fill="#9a9a9a"/></svg>
<svg class="a" style="left:5002px;top:137px" width="30" height="22" viewBox="0 0 30 22"><path d="M0 3 H28 M4 11 H24 M10 19 H18" stroke="#9a9a9a" stroke-width="4"/></svg>
<svg class="a" style="left:5042px;top:134px" width="20" height="28" viewBox="0 0 20 28"><rect x="1.5" y="1.5" width="22" height="26" rx="3" fill="none" stroke="#9a9a9a" stroke-width="3.2"/><path d="M8 20 L18 8" stroke="#9a9a9a" stroke-width="3"/></svg>
<div class="a" style="left:4265px;top:170px;width:789px;height:2px;background:#1f1f1f;"></div>
<div class="a" style="left:4265px;top:124px;width:789px;height:2px;background:#1f1f1f;"></div>
<div class="a" style="left:4266px;top:174px;width:335px;height:40px;background:#1f1f1f;"></div>
<div class="a" style="left:4602px;top:174px;width:452px;height:40px;background:#242424;"></div>
<svg class="a" style="left:4302px;top:181px" width="28" height="26" viewBox="0 0 28 26"><ellipse cx="13" cy="12" rx="12.5" ry="9.5" fill="#7fd8f8"/><path d="M5 11 Q13 17 21 11 Q13 14 5 11 Z" fill="#1e1e1e" stroke="#1e1e1e" stroke-width="2.5"/></svg>
<div class="t" style="left:4338px;top:183px;font-size:22px;color:#c0c0c0;letter-spacing:1.00px;">Torus</div>
<svg class="a" style="left:4514px;top:184px" width="20" height="20" viewBox="0 0 20 20"><rect x="0" y="0" width="20" height="20" rx="4" fill="#5a5a5a"/><path d="M5 15 L15 5" stroke="#1e1e1e" stroke-width="3"/></svg>
<svg class="a" style="left:4546px;top:180px" width="12" height="30" viewBox="0 0 12 30"><circle cx="6" cy="6" r="5.5" fill="#555"/><circle cx="6" cy="23" r="5.5" fill="#555"/></svg>
<svg class="a" style="left:4566px;top:184px" width="24" height="20" viewBox="0 0 24 20"><path d="M2 10 L9 17 L22 3" stroke="#5ed67a" stroke-width="3.6" fill="none"/></svg>
<div class="a" style="left:4266px;top:214px;width:335px;height:40px;background:#2a2a2a;"></div>
<div class="a" style="left:4602px;top:214px;width:452px;height:40px;background:#2a2a2a;"></div>
<svg class="a" style="left:4302px;top:221px" width="28" height="26" viewBox="0 0 28 26"><path d="M4 4 V22 H22" stroke="#c8ccf4" stroke-width="2.2" fill="none"/><path d="M4 0 L1 5 H7 Z M26 22 L21 19 V25 Z" fill="#c8ccf4"/><circle cx="17" cy="7" r="6.5" fill="#c8ccf4"/></svg>
<div class="t" style="left:4338px;top:223px;font-size:22px;color:#c0c0c0;letter-spacing:0.80px;">Null.2</div>
<svg class="a" style="left:4514px;top:224px" width="20" height="20" viewBox="0 0 20 20"><rect x="0" y="0" width="20" height="20" rx="4" fill="#5a5a5a"/><path d="M5 15 L15 5" stroke="#1e1e1e" stroke-width="3"/></svg>
<svg class="a" style="left:4546px;top:220px" width="12" height="30" viewBox="0 0 12 30"><circle cx="6" cy="6" r="5.5" fill="#555"/><circle cx="6" cy="23" r="5.5" fill="#555"/></svg>
<div class="a" style="left:4266px;top:254px;width:335px;height:40px;background:#1f1f1f;"></div>
<div class="a" style="left:4602px;top:254px;width:452px;height:40px;background:#242424;"></div>
<svg class="a" style="left:4302px;top:261px" width="28" height="26" viewBox="0 0 28 26"><path d="M4 4 V22 H22" stroke="#c8ccf4" stroke-width="2.2" fill="none"/><path d="M4 0 L1 5 H7 Z M26 22 L21 19 V25 Z" fill="#c8ccf4"/><circle cx="17" cy="7" r="6.5" fill="#c8ccf4"/></svg>
<div class="t" style="left:4338px;top:263px;font-size:22px;color:#cd8530;letter-spacing:0.00px;">Null.1</div>
<svg class="a" style="left:4514px;top:264px" width="20" height="20" viewBox="0 0 20 20"><rect x="0" y="0" width="20" height="20" rx="4" fill="#5a5a5a"/><path d="M5 15 L15 5" stroke="#1e1e1e" stroke-width="3"/></svg>
<svg class="a" style="left:4546px;top:260px" width="12" height="30" viewBox="0 0 12 30"><circle cx="6" cy="6" r="5.5" fill="#555"/><circle cx="6" cy="23" r="5.5" fill="#555"/></svg>
<div class="a" style="left:4266px;top:294px;width:335px;height:40px;background:#2a2a2a;"></div>
<div class="a" style="left:4602px;top:294px;width:452px;height:40px;background:#2a2a2a;"></div>
<svg class="a" style="left:4302px;top:301px" width="28" height="26" viewBox="0 0 28 26"><circle cx="13" cy="12" r="7" fill="#f0f0f0"/><circle cx="13" cy="12" r="3" fill="#6cd884"/><circle cx="21.7" cy="17.0" r="3" fill="#6cd884"/><circle cx="13.0" cy="22.0" r="3" fill="#6cd884"/><circle cx="4.3" cy="17.0" r="3" fill="#6cd884"/><circle cx="4.3" cy="7.0" r="3" fill="#6cd884"/><circle cx="13.0" cy="2.0" r="3" fill="#6cd884"/><circle cx="21.7" cy="7.0" r="3" fill="#6cd884"/></svg>
<div class="t" style="left:4338px;top:303px;font-size:22px;color:#c0c0c0;letter-spacing:0.60px;">Cloner</div>
<svg class="a" style="left:4514px;top:304px" width="20" height="20" viewBox="0 0 20 20"><rect x="0" y="0" width="20" height="20" rx="4" fill="#5a5a5a"/><path d="M5 15 L15 5" stroke="#1e1e1e" stroke-width="3"/></svg>
<svg class="a" style="left:4546px;top:300px" width="12" height="30" viewBox="0 0 12 30"><circle cx="6" cy="6" r="5.5" fill="#555"/><circle cx="6" cy="23" r="5.5" fill="#555"/></svg>
<svg class="a" style="left:4566px;top:304px" width="24" height="20" viewBox="0 0 24 20"><path d="M2 10 L9 17 L22 3" stroke="#5ed67a" stroke-width="3.6" fill="none"/></svg>
<div class="a" style="left:4266px;top:334px;width:335px;height:40px;background:#1f1f1f;"></div>
<div class="a" style="left:4602px;top:334px;width:452px;height:40px;background:#242424;"></div>
<svg class="a" style="left:4302px;top:341px" width="28" height="26" viewBox="0 0 28 26"><path d="M13 3 L22 20 H4 Z" fill="#7fd8f8"/><circle cx="13" cy="3" r="3" fill="#fafafa"/><circle cx="3" cy="21" r="3" fill="#fafafa"/><circle cx="23" cy="21" r="3" fill="#fafafa"/></svg>
<div class="t" style="left:4338px;top:343px;font-size:22px;color:#f4c534;letter-spacing:0.33px;">Text</div>
<svg class="a" style="left:4514px;top:344px" width="20" height="20" viewBox="0 0 20 20"><rect x="0" y="0" width="20" height="20" rx="4" fill="#5a5a5a"/><path d="M5 15 L15 5" stroke="#1e1e1e" stroke-width="3"/></svg>
<svg class="a" style="left:4546px;top:340px" width="12" height="30" viewBox="0 0 12 30"><circle cx="6" cy="6" r="5.5" fill="#555"/><circle cx="6" cy="23" r="5.5" fill="#555"/></svg>
<div class="a" style="left:4266px;top:374px;width:335px;height:40px;background:#2a2a2a;"></div>
<div class="a" style="left:4602px;top:374px;width:452px;height:40px;background:#2a2a2a;"></div>
<svg class="a" style="left:4302px;top:381px" width="28" height="26" viewBox="0 0 28 26"><rect x="1" y="1" width="12" height="12" fill="#fafafa"/><rect x="8" y="8" width="17" height="17" fill="#6cd884"/><rect x="8" y="8" width="5" height="5" fill="#1e1e1e"/></svg>
<div class="t" style="left:4338px;top:383px;font-size:22px;color:#c0c0c0;letter-spacing:0.50px;">Boole</div>
<svg class="a" style="left:4514px;top:384px" width="20" height="20" viewBox="0 0 20 20"><rect x="0" y="0" width="20" height="20" rx="4" fill="#5a5a5a"/><path d="M5 15 L15 5" stroke="#1e1e1e" stroke-width="3"/></svg>
<svg class="a" style="left:4546px;top:380px" width="12" height="30" viewBox="0 0 12 30"><circle cx="6" cy="6" r="5.5" fill="#555"/><circle cx="6" cy="23" r="5.5" fill="#555"/></svg>
<svg class="a" style="left:4566px;top:384px" width="24" height="20" viewBox="0 0 24 20"><path d="M2 10 L9 17 L22 3" stroke="#5ed67a" stroke-width="3.6" fill="none"/></svg>
<div class="a" style="left:4266px;top:414px;width:335px;height:40px;background:#1f1f1f;"></div>
<div class="a" style="left:4602px;top:414px;width:452px;height:40px;background:#242424;"></div>
<svg class="a" style="left:4326px;top:421px" width="28" height="26" viewBox="0 0 28 26"><path d="M4 4 V22 H22" stroke="#c8ccf4" stroke-width="2.2" fill="none"/><path d="M4 0 L1 5 H7 Z M26 22 L21 19 V25 Z" fill="#c8ccf4"/><circle cx="17" cy="7" r="6.5" fill="#c8ccf4"/></svg>
<div class="t" style="left:4362px;top:423px;font-size:22px;color:#c0c0c0;letter-spacing:1.17px;">Null</div>
<svg class="a" style="left:4514px;top:424px" width="20" height="20" viewBox="0 0 20 20"><rect x="0" y="0" width="20" height="20" rx="4" fill="#5a5a5a"/><path d="M5 15 L15 5" stroke="#1e1e1e" stroke-width="3"/></svg>
<svg class="a" style="left:4546px;top:420px" width="12" height="30" viewBox="0 0 12 30"><circle cx="6" cy="6" r="5.5" fill="#555"/><circle cx="6" cy="23" r="5.5" fill="#555"/></svg>
<div class="a" style="left:4266px;top:454px;width:335px;height:40px;background:#2a2a2a;"></div>
<div class="a" style="left:4602px;top:454px;width:452px;height:40px;background:#2a2a2a;"></div>
<svg class="a" style="left:4350px;top:461px" width="28" height="26" viewBox="0 0 28 26"><path d="M11 2 V25" stroke="#fafafa" stroke-width="2.4"/><path d="M8 5 L2 9 V19 L8 23" stroke="#c0c0c0" stroke-width="2" fill="none"/><path d="M14 5 L21 9 V19 L14 23" stroke="#6cd884" stroke-width="2" fill="none"/></svg>
<div class="t" style="left:4386px;top:463px;font-size:22px;color:#c0c0c0;letter-spacing:1.00px;">Symmetry</div>
<svg class="a" style="left:4514px;top:464px" width="20" height="20" viewBox="0 0 20 20"><rect x="0" y="0" width="20" height="20" rx="4" fill="#5a5a5a"/><path d="M5 15 L15 5" stroke="#1e1e1e" stroke-width="3"/></svg>
<svg class="a" style="left:4546px;top:460px" width="12" height="30" viewBox="0 0 12 30"><circle cx="6" cy="6" r="5.5" fill="#555"/><circle cx="6" cy="23" r="5.5" fill="#555"/></svg>
<svg class="a" style="left:4566px;top:464px" width="24" height="20" viewBox="0 0 24 20"><path d="M2 10 L9 17 L22 3" stroke="#5ed67a" stroke-width="3.6" fill="none"/></svg>
<div class="a" style="left:4266px;top:494px;width:335px;height:40px;background:#1f1f1f;"></div>
<div class="a" style="left:4602px;top:494px;width:452px;height:40px;background:#242424;"></div>
<svg class="a" style="left:4374px;top:501px" width="28" height="26" viewBox="0 0 28 26"><path d="M13 3 L22 20 H4 Z" fill="#7fd8f8"/><circle cx="13" cy="3" r="3" fill="#fafafa"/><circle cx="3" cy="21" r="3" fill="#fafafa"/><circle cx="23" cy="21" r="3" fill="#fafafa"/></svg>
<div class="t" style="left:4410px;top:503px;font-size:22px;color:#c0c0c0;letter-spacing:0.50px;">Plane</div>
<svg class="a" style="left:4514px;top:504px" width="20" height="20" viewBox="0 0 20 20"><rect x="0" y="0" width="20" height="20" rx="4" fill="#5a5a5a"/><path d="M5 15 L15 5" stroke="#1e1e1e" stroke-width="3"/></svg>
<svg class="a" style="left:4546px;top:500px" width="12" height="30" viewBox="0 0 12 30"><circle cx="6" cy="6" r="5.5" fill="#555"/><circle cx="6" cy="23" r="5.5" fill="#555"/></svg>
<div class="a" style="left:4266px;top:534px;width:335px;height:40px;background:#2a2a2a;"></div>
<div class="a" style="left:4602px;top:534px;width:452px;height:40px;background:#2a2a2a;"></div>
<svg class="a" style="left:4326px;top:541px" width="28" height="26" viewBox="0 0 28 26"><path d="M11 2 V25" stroke="#fafafa" stroke-width="2.4"/><path d="M8 5 L2 9 V19 L8 23" stroke="#c0c0c0" stroke-width="2" fill="none"/><path d="M14 5 L21 9 V19 L14 23" stroke="#6cd884" stroke-width="2" fill="none"/></svg>
<div class="t" style="left:4362px;top:543px;font-size:22px;color:#c0c0c0;letter-spacing:1.00px;">Symmetry</div>
<svg class="a" style="left:4514px;top:544px" width="20" height="20" viewBox="0 0 20 20"><rect x="0" y="0" width="20" height="20" rx="4" fill="#5a5a5a"/><path d="M5 15 L15 5" stroke="#1e1e1e" stroke-width="3"/></svg>
<svg class="a" style="left:4546px;top:540px" width="12" height="30" viewBox="0 0 12 30"><circle cx="6" cy="6" r="5.5" fill="#555"/><circle cx="6" cy="23" r="5.5" fill="#555"/></svg>
<svg class="a" style="left:4566px;top:544px" width="24" height="20" viewBox="0 0 24 20"><path d="M2 10 L9 17 L22 3" stroke="#5ed67a" stroke-width="3.6" fill="none"/></svg>
<div class="a" style="left:4266px;top:574px;width:335px;height:40px;background:#1f1f1f;"></div>
<div class="a" style="left:4602px;top:574px;width:452px;height:40px;background:#242424;"></div>
<svg class="a" style="left:4350px;top:581px" width="28" height="26" viewBox="0 0 28 26"><path d="M2 5 V21 Q12 27 22 21 V5 Z" fill="#7fd8f8"/><ellipse cx="12" cy="5" rx="10" ry="4" fill="#a6e4fa"/></svg>
<div class="t" style="left:4386px;top:583px;font-size:22px;color:#c0c0c0;letter-spacing:0.71px;">Cylinder</div>
<svg class="a" style="left:4514px;top:584px" width="20" height="20" viewBox="0 0 20 20"><rect x="0" y="0" width="20" height="20" rx="4" fill="#5a5a5a"/><path d="M5 15 L15 5" stroke="#1e1e1e" stroke-width="3"/></svg>
<svg class="a" style="left:4546px;top:580px" width="12" height="30" viewBox="0 0 12 30"><circle cx="6" cy="6" r="5.5" fill="#555"/><circle cx="6" cy="23" r="5.5" fill="#555"/></svg>
<svg class="a" style="left:4566px;top:584px" width="24" height="20" viewBox="0 0 24 20"><path d="M2 10 L9 17 L22 3" stroke="#5ed67a" stroke-width="3.6" fill="none"/></svg>
<div class="a" style="left:4266px;top:614px;width:335px;height:40px;background:#2a2a2a;"></div>
<div class="a" style="left:4602px;top:614px;width:452px;height:40px;background:#2a2a2a;"></div>
<svg class="a" style="left:4302px;top:621px" width="28" height="26" viewBox="0 0 28 26"><path d="M4 4 V22 H22" stroke="#c8ccf4" stroke-width="2.2" fill="none"/><path d="M4 0 L1 5 H7 Z M26 22 L21 19 V25 Z" fill="#c8ccf4"/><circle cx="17" cy="7" r="6.5" fill="#c8ccf4"/></svg>
<div class="t" style="left:4338px;top:623px;font-size:22px;color:#c0c0c0;letter-spacing:0.50px;">Sub</div>
<svg class="a" style="left:4514px;top:624px" width="20" height="20" viewBox="0 0 20 20"><rect x="0" y="0" width="20" height="20" rx="4" fill="#5a5a5a"/><path d="M5 15 L15 5" stroke="#1e1e1e" stroke-width="3"/></svg>
<svg class="a" style="left:4546px;top:620px" width="12" height="30" viewBox="0 0 12 30"><circle cx="6" cy="6" r="5.5" fill="#555"/><circle cx="6" cy="23" r="5.5" fill="#555"/></svg>
<div class="a" style="left:4282px;top:174px;width:2px;height:452px;background:#555555;"></div>
<div class="a" style="left:4284px;top:194px;width:16px;height:2px;background:#555555;"></div>
<div class="a" style="left:4284px;top:354px;width:16px;height:2px;background:#555555;"></div>
<div class="a" style="left:4306px;top:414px;width:2px;height:132px;background:#555555;"></div>
<div class="a" style="left:4330px;top:454px;width:2px;height:12px;background:#555555;"></div>
<div class="a" style="left:4354px;top:494px;width:2px;height:21px;background:#555555;"></div>
<div class="a" style="left:4354px;top:513px;width:18px;height:2px;background:#555555;"></div>
<div class="a" style="left:4330px;top:574px;width:2px;height:21px;background:#555555;"></div>
<div class="a" style="left:4330px;top:593px;width:18px;height:2px;background:#555555;"></div>
<svg class="a" style="left:4274px;top:226px" width="18" height="18" viewBox="0 0 18 18"><rect x="1" y="1" width="16" height="16" fill="#2a2a2a" stroke="#7a7a7a" stroke-width="2"/><path d="M4 9 H14 M9 4 V14" stroke="#8a8a8a" stroke-width="2"/></svg>
<div class="a" style="left:4292px;top:235px;width:8px;height:2px;background:#555555;"></div>
<svg class="a" style="left:4274px;top:266px" width="18" height="18" viewBox="0 0 18 18"><rect x="1" y="1" width="16" height="16" fill="#1f1f1f" stroke="#7a7a7a" stroke-width="2"/><path d="M4 9 H14 M9 4 V14" stroke="#8a8a8a" stroke-width="2"/></svg>
<div class="a" style="left:4292px;top:275px;width:8px;height:2px;background:#555555;"></div>
<svg class="a" style="left:4274px;top:306px" width="18" height="18" viewBox="0 0 18 18"><rect x="1" y="1" width="16" height="16" fill="#2a2a2a" stroke="#7a7a7a" stroke-width="2"/><path d="M4 9 H14 M9 4 V14" stroke="#8a8a8a" stroke-width="2"/></svg>
<div class="a" style="left:4292px;top:315px;width:8px;height:2px;background:#555555;"></div>
<svg class="a" style="left:4274px;top:386px" width="18" height="18" viewBox="0 0 18 18"><rect x="1" y="1" width="16" height="16" fill="#2a2a2a" stroke="#7a7a7a" stroke-width="2"/><path d="M4 9 H14" stroke="#8a8a8a" stroke-width="2"/></svg>
<div class="a" style="left:4292px;top:395px;width:8px;height:2px;background:#555555;"></div>
<svg class="a" style="left:4298px;top:426px" width="18" height="18" viewBox="0 0 18 18"><rect x="1" y="1" width="16" height="16" fill="#1f1f1f" stroke="#7a7a7a" stroke-width="2"/><path d="M4 9 H14" stroke="#8a8a8a" stroke-width="2"/></svg>
<div class="a" style="left:4316px;top:435px;width:8px;height:2px;background:#555555;"></div>
<svg class="a" style="left:4322px;top:466px" width="18" height="18" viewBox="0 0 18 18"><rect x="1" y="1" width="16" height="16" fill="#2a2a2a" stroke="#7a7a7a" stroke-width="2"/><path d="M4 9 H14" stroke="#8a8a8a" stroke-width="2"/></svg>
<div class="a" style="left:4340px;top:475px;width:8px;height:2px;background:#555555;"></div>
<svg class="a" style="left:4298px;top:546px" width="18" height="18" viewBox="0 0 18 18"><rect x="1" y="1" width="16" height="16" fill="#2a2a2a" stroke="#7a7a7a" stroke-width="2"/><path d="M4 9 H14" stroke="#8a8a8a" stroke-width="2"/></svg>
<div class="a" style="left:4316px;top:555px;width:8px;height:2px;background:#555555;"></div>
<svg class="a" style="left:4274px;top:626px" width="18" height="18" viewBox="0 0 18 18"><rect x="1" y="1" width="16" height="16" fill="#2a2a2a" stroke="#7a7a7a" stroke-width="2"/><path d="M4 9 H14 M9 4 V14" stroke="#8a8a8a" stroke-width="2"/></svg>
<div class="a" style="left:4292px;top:635px;width:8px;height:2px;background:#555555;"></div>
<div class="a" style="left:4600px;top:174px;width:2px;height:1126px;background:#1c1c1c;"></div>
<svg class="a" style="left:4609px;top:180px" width="26" height="26" viewBox="0 0 26 26"><path d="M2 25 V2 H25" stroke="#8a8ef0" stroke-width="2.4" fill="none"/><path d="M6 6 H19 Q19 17 6 19 Z" fill="#b4b4b4"/></svg>
<svg class="a" style="left:4610px;top:341px" width="26" height="26" viewBox="0 0 26 26"><rect x="1" y="1" width="24" height="24" fill="#b8b8b8"/><rect x="3" y="3" width="10" height="10" fill="#1e1e1e"/><rect x="13" y="13" width="10" height="10" fill="#1e1e1e"/></svg>
<svg class="a" style="left:4649px;top:340px" width="26" height="26" viewBox="0 0 26 26"><path d="M2 25 V2 H25" stroke="#8a8ef0" stroke-width="2.4" fill="none"/><path d="M6 6 H19 Q19 17 6 19 Z" fill="#b4b4b4"/></svg>
<svg class="a" style="left:4688px;top:341px" width="28" height="26" viewBox="0 0 28 26"><path d="M14 3 L27 23 H1 Z" fill="#b4b4b4"/></svg>
<svg class="a" style="left:4728px;top:341px" width="28" height="26" viewBox="0 0 28 26"><path d="M14 3 L27 23 H1 Z" fill="#b4b4b4"/></svg>
<svg class="a" style="left:4768px;top:341px" width="28" height="26" viewBox="0 0 28 26"><path d="M14 3 L27 23 H1 Z" fill="#b4b4b4"/></svg>
<svg class="a" style="left:4808px;top:341px" width="28" height="26" viewBox="0 0 28 26"><path d="M14 3 L27 23 H1 Z" fill="#b4b4b4"/></svg>
<svg class="a" style="left:4848px;top:341px" width="28" height="26" viewBox="0 0 28 26"><path d="M14 3 L27 23 H1 Z" fill="#b4b4b4"/></svg>
<svg class="a" style="left:4888px;top:341px" width="28" height="26" viewBox="0 0 28 26"><path d="M14 4 L26 22 H2 Z" fill="none" stroke="#b4b4b4" stroke-width="2.2"/></svg>
<svg class="a" style="left:4928px;top:341px" width="28" height="26" viewBox="0 0 28 26"><path d="M14 4 L26 22 H2 Z" fill="none" stroke="#b4b4b4" stroke-width="2.2"/></svg>
<svg class="a" style="left:4968px;top:341px" width="28" height="26" viewBox="0 0 28 26"><path d="M14 4 L26 22 H2 Z" fill="none" stroke="#b4b4b4" stroke-width="2.2"/></svg>
<svg class="a" style="left:5008px;top:341px" width="28" height="26" viewBox="0 0 28 26"><path d="M14 4 L26 22 H2 Z" fill="none" stroke="#b4b4b4" stroke-width="2.2"/></svg>
<svg class="a" style="left:5048px;top:341px" width="28" height="26" viewBox="0 0 28 26"><path d="M14 4 L26 22 H2 Z" fill="none" stroke="#b4b4b4" stroke-width="2.2"/></svg>
<svg class="a" style="left:4609px;top:500px" width="26" height="26" viewBox="0 0 26 26"><path d="M2 25 V2 H25" stroke="#8a8ef0" stroke-width="2.4" fill="none"/><path d="M6 6 H19 Q19 17 6 19 Z" fill="#b4b4b4"/></svg>
<svg class="a" style="left:4649px;top:501px" width="26" height="26" viewBox="0 0 26 26"><rect x="1" y="1" width="24" height="24" fill="#b8b8b8"/><rect x="3" y="3" width="10" height="10" fill="#1e1e1e"/><rect x="13" y="13" width="10" height="10" fill="#1e1e1e"/></svg>
<svg class="a" style="left:4609px;top:580px" width="26" height="26" viewBox="0 0 26 26"><path d="M2 25 V2 H25" stroke="#8a8ef0" stroke-width="2.4" fill="none"/><path d="M6 6 H19 Q19 17 6 19 Z" fill="#b4b4b4"/></svg>
<div class="a" style="left:4267px;top:1316px;width:756px;height:7px;background:#484848;border-radius:4px"></div>
<div class="a" style="left:4265px;top:1336px;width:789px;height:3px;background:#1c1c1c;"></div>
<div class="a" style="left:4265px;top:1339px;width:789px;height:1371px;background:#2a2a2a;"></div>
<svg class="a" style="left:4278px;top:1352px" width="28" height="20" viewBox="0 0 28 20"><path d="M0 2 H28 M0 10 H28 M0 18 H28" stroke="#9a9a9a" stroke-width="3.5"/></svg>
<div class="t" style="left:4326px;top:1348px;font-size:22px;color:#b8b8b8;letter-spacing:1.33px;">Mode</div>
<div class="t" style="left:4414px;top:1348px;font-size:22px;color:#b8b8b8;letter-spacing:0.67px;">Edit</div>
<div class="t" style="left:4484px;top:1348px;font-size:22px;color:#b8b8b8;letter-spacing:0.75px;">User Data</div>
<svg class="a" style="left:4762px;top:1348px" width="30" height="28" viewBox="0 0 30 28"><path d="M28 14 H4 M14 3 L3 14 L14 25" stroke="#a0a0a0" stroke-width="3.4" fill="none"/></svg>
<svg class="a" style="left:4801px;top:1348px" width="30" height="28" viewBox="0 0 30 28"><path d="M2 14 H26 M16 3 L27 14 L16 25" stroke="#474747" stroke-width="3.4" fill="none"/></svg>
<svg class="a" style="left:4842px;top:1346px" width="28" height="32" viewBox="0 0 28 32"><path d="M14 30 V4 M3 15 L14 3 L25 15" stroke="#a0a0a0" stroke-width="3.4" fill="none"/></svg>
<svg class="a" style="left:4883px;top:1348px" width="30" height="30" viewBox="0 0 30 30"><circle cx="12" cy="11.5" r="8.8" fill="none" stroke="#a0a0a0" stroke-width="3"/><path d="M18 18 L27 27" stroke="#a0a0a0" stroke-width="3.4"/></svg>
<svg class="a" style="left:4921px;top:1350px" width="32" height="24" viewBox="0 0 32 24"><path d="M1 3.5 H29 M5 11.5 H25 M10 19.5 H19" stroke="#a0a0a0" stroke-width="4"/></svg>
<svg class="a" style="left:4963px;top:1346px" width="30" height="32" viewBox="0 0 30 32"><rect x="3" y="15" width="23" height="15" rx="2" fill="none" stroke="#a0a0a0" stroke-width="3"/><path d="M5 11 A8 8 0 0 1 21 9 V15" stroke="#a0a0a0" stroke-width="3" fill="none"/></svg>
<svg class="a" style="left:4999px;top:1346px" width="34" height="34" viewBox="0 0 34 34"><circle cx="16" cy="16" r="14.5" fill="none" stroke="#a0a0a0" stroke-width="3"/><circle cx="16" cy="16" r="5.2" fill="none" stroke="#a0a0a0" stroke-width="2.6"/></svg>
<svg class="a" style="left:5041px;top:1348px" width="20" height="30" viewBox="0 0 20 30"><rect x="1.5" y="2" width="22" height="26" rx="3" fill="none" stroke="#a0a0a0" stroke-width="3"/></svg>
<div class="a" style="left:4265px;top:1384px;width:789px;height:2px;background:#1f1f1f;"></div>
<svg class="a" style="left:4283px;top:1398px" width="34" height="30" viewBox="0 0 34 30"><path d="M17 6 L29 24 H5 Z" fill="#7fd8f8"/><circle cx="17" cy="4" r="3.5" fill="#fafafa"/><circle cx="4" cy="26" r="3.5" fill="#fafafa"/><circle cx="30" cy="26" r="3.5" fill="#fafafa"/></svg>
<div class="t" style="left:4330px;top:1401px;font-size:22px;color:#c4c4c4;letter-spacing:0.67px;">Polygon Object (2 Elements) [Plane.1, Text]</div>
<div class="a" style="left:4843px;top:1398px;width:230px;height:34px;background:#3a3a3a;border-radius:17px 0 0 17px"></div>
<div class="t" style="left:4856px;top:1404px;font-size:22px;color:#c8c8c8;letter-spacing:1.00px;">Default</div>
<div class="a" style="left:5021px;top:1398px;width:2px;height:34px;background:#2a2a2a;"></div>
<svg class="a" style="left:5030px;top:1410px" width="18" height="12" viewBox="0 0 18 12"><path d="M0 0 H16 L8 9 Z" fill="#c0c0c0"/></svg>
<div class="a" style="left:4282px;top:1444px;width:94px;height:36px;background:#525a9c;border-radius:7px"></div>
<div class="t" style="left:4300px;top:1451px;font-size:22px;color:#f0f0f0;letter-spacing:0.75px;">Basic</div>
<div class="a" style="left:4385px;top:1444px;width:162px;height:36px;background:#3a3a3a;border-radius:7px"></div>
<div class="t" style="left:4402px;top:1451px;font-size:22px;color:#c0c0c0;letter-spacing:0.90px;">Coordinates</div>
<div class="a" style="left:4557px;top:1444px;width:129px;height:36px;background:#3a3a3a;border-radius:7px"></div>
<svg class="a" style="left:4574px;top:1452px" width="20" height="20" viewBox="0 0 20 20"><path d="M3 18 V9 A7 7 0 0 1 17 9 V18 Z" fill="none" stroke="#c0c0c0" stroke-width="2"/></svg>
<div class="t" style="left:4601px;top:1451px;font-size:22px;color:#c0c0c0;letter-spacing:1.00px;">Phong</div>
<div class="t" style="left:4282px;top:1499px;font-size:23px;color:#f2f2f2;letter-spacing:1.13px;">Basic Properties</div>
<div class="a" style="left:4278px;top:1534px;width:776px;height:2px;background:#383838;"></div>
<svg class="a" style="left:4299px;top:1549px" width="12" height="18" viewBox="0 0 12 18"><path d="M2 2 L9 9 L2 16" stroke="#b0b0b0" stroke-width="2.2" fill="none"/></svg>
<div class="t" style="left:4326px;top:1548px;font-size:21px;color:#cacaca;letter-spacing:0.33px;font-weight:bold">ICON</div>
<div class="a" style="left:4278px;top:1582px;width:776px;height:2px;background:#383838;"></div>
<div class="t" style="left:4326px;top:1597px;font-size:22px;color:#b8b8b8;letter-spacing:1.00px;">Name</div>
<div class="a" style="left:4528px;top:1592px;width:540px;height:34px;background:#1c1c1c;border-radius:6px"></div>
<div class="t" style="left:4538px;top:1598px;font-size:22px;color:#c8c8c8;letter-spacing:0.50px;font-style:italic">Mixed</div>
<div class="t" style="left:4326px;top:1640px;font-size:22px;color:#b8b8b8;letter-spacing:0.50px;">Layer</div>
<div class="a" style="left:4528px;top:1635px;width:466px;height:33px;background:#1c1c1c;border-radius:6px"></div>
<svg class="a" style="left:5000px;top:1646px" width="16" height="10" viewBox="0 0 16 10"><path d="M0 0 H14 L7 8 Z" fill="#b0b0b0"/></svg>
<svg class="a" style="left:5027px;top:1636px" width="30" height="30" viewBox="0 0 30 30"><path d="M3 27 L5 20 L19 6 L24 11 L10 25 Z" fill="none" stroke="#a8a8a8" stroke-width="2.4"/><path d="M20 4 L26 10" stroke="#a8a8a8" stroke-width="4"/></svg>
<svg class="a" style="left:4287px;top:1682px" width="20" height="18" viewBox="0 0 20 18"><path d="M9 1 L17 9 L9 17 L1 9 Z" fill="none" stroke="#b8b8b8" stroke-width="2.2"/></svg>
<div class="t" style="left:4326px;top:1679px;font-size:22px;color:#b8b8b8;letter-spacing:0.88px;">Editor Visibility</div>
<div class="a" style="left:4528px;top:1675px;width:526px;height:33px;background:#3c3c3c;"></div>
<div class="a" style="left:4528px;top:1675px;width:176px;height:33px;background:#5c5c5c;"></div>
<div class="a" style="left:4881px;top:1675px;width:2px;height:33px;background:#2e2e2e;"></div>
<div class="t" style="left:4528px;top:1680px;width:176px;text-align:center;font-size:22px;color:#f4f4f4">Default</div>
<div class="t" style="left:4704px;top:1680px;width:177px;text-align:center;font-size:22px;color:#d8d8d8">On</div>
<div class="t" style="left:4883px;top:1680px;width:177px;text-align:center;font-size:22px;color:#d8d8d8">Off</div>
<svg class="a" style="left:4287px;top:1721px" width="20" height="18" viewBox="0 0 20 18"><path d="M9 1 L17 9 L9 17 L1 9 Z" fill="none" stroke="#b8b8b8" stroke-width="2.2"/></svg>
<div class="t" style="left:4326px;top:1718px;font-size:22px;color:#b8b8b8;letter-spacing:0.78px;">Renderer Visibility</div>
<div class="a" style="left:4528px;top:1714px;width:526px;height:33px;background:#3c3c3c;"></div>
<div class="a" style="left:4528px;top:1714px;width:176px;height:33px;background:#5c5c5c;"></div>
<div class="a" style="left:4881px;top:1714px;width:2px;height:33px;background:#2e2e2e;"></div>
<div class="t" style="left:4528px;top:1719px;width:176px;text-align:center;font-size:22px;color:#f4f4f4">Default</div>
<div class="t" style="left:4704px;top:1719px;width:177px;text-align:center;font-size:22px;color:#d8d8d8">On</div>
<div class="t" style="left:4883px;top:1719px;width:177px;text-align:center;font-size:22px;color:#d8d8d8">Off</div>
<div class="a" style="left:4278px;top:1755px;width:776px;height:2px;background:#383838;"></div>
<svg class="a" style="left:4287px;top:1775px" width="20" height="18" viewBox="0 0 20 18"><path d="M9 1 L17 9 L9 17 L1 9 Z" fill="none" stroke="#b8b8b8" stroke-width="2.2"/></svg>
<div class="t" style="left:4326px;top:1773px;font-size:22px;color:#b8b8b8;letter-spacing:0.75px;">Display Color</div>
<div class="a" style="left:4528px;top:1768px;width:540px;height:33px;background:#3c3c3c;border-radius:6px"></div>
<div class="t" style="left:4542px;top:1774px;font-size:22px;color:#d0d0d0;letter-spacing:1.00px;">Material</div>
<svg class="a" style="left:5030px;top:1782px" width="18" height="12" viewBox="0 0 18 12"><path d="M0 0 H16 L8 9 Z" fill="#c0c0c0"/></svg>
<svg class="a" style="left:4287px;top:1813px" width="20" height="18" viewBox="0 0 20 18"><path d="M9 1 L17 9 L9 17 L1 9 Z" fill="none" stroke="#555" stroke-width="2.2"/></svg>
<div class="t" style="left:4326px;top:1810px;font-size:22px;color:#6a6a6a;letter-spacing:0.75px;">Color</div>
<svg class="a" style="left:4506px;top:1812px" width="12" height="20" viewBox="0 0 12 20"><path d="M2 2 L9 10 L2 18" stroke="#d0d0d0" stroke-width="2.2" fill="none"/></svg>
<div class="a" style="left:4527px;top:1804px;width:167px;height:32px;background:transparent;border:2px solid #1c1c1c;border-radius:3px"></div>
<svg class="a" style="left:4710px;top:1802px" width="32" height="34" viewBox="0 0 32 34"><path d="M3 31 L5 24 L19 10 L24 15 L10 29 Z" fill="none" stroke="#555" stroke-width="2.4"/><path d="M20 8 L28 16" stroke="#555" stroke-width="5"/></svg>
<svg class="a" style="left:4287px;top:1851px" width="20" height="18" viewBox="0 0 20 18"><path d="M9 1 L17 9 L9 17 L1 9 Z" fill="none" stroke="#b8b8b8" stroke-width="2.2"/></svg>
<div class="t" style="left:4326px;top:1848px;font-size:22px;color:#b8b8b8;letter-spacing:0.25px;">X-Ray</div>
<div class="a" style="left:4528px;top:1848px;width:24px;height:24px;background:transparent;border:2px solid #8a8a8a;border-radius:3px"></div>
</body></html>
